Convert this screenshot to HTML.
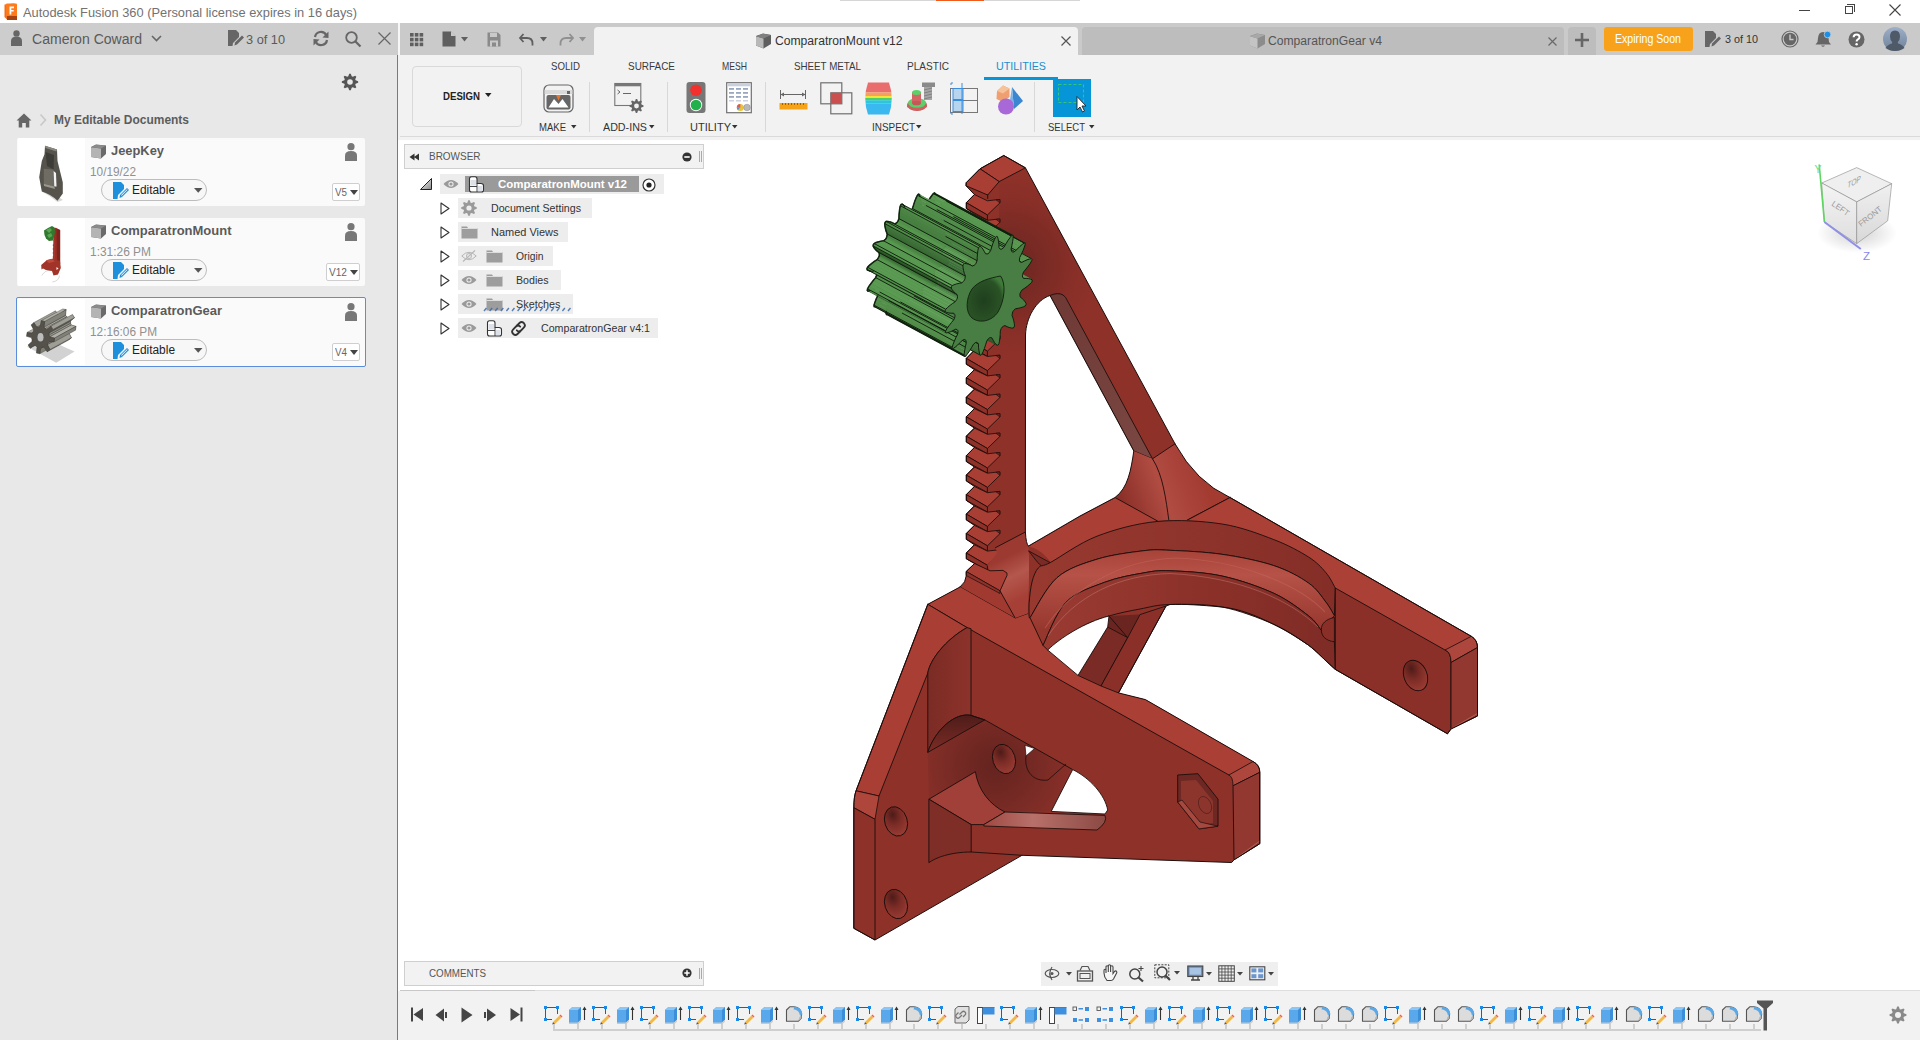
<!DOCTYPE html>
<html><head><meta charset="utf-8">
<style>
*{margin:0;padding:0;box-sizing:border-box}
html,body{width:1920px;height:1040px;overflow:hidden;background:#fff;font-family:"Liberation Sans",sans-serif;position:relative}
.a{position:absolute}
.t{position:absolute;white-space:nowrap;line-height:1}
svg{position:absolute;overflow:visible}
</style></head><body>
<div class="a" style="left:0px;top:0px;width:1920px;height:23px;background:#fff;"></div>
<div class="a" style="left:840px;top:0px;width:240px;height:1px;background:#d6d6d6;"></div>
<div class="a" style="left:936px;top:0px;width:48px;height:1px;background:#f05a1a;"></div>
<div class="a" style="left:0px;top:23px;width:398px;height:32px;background:#cdcdcd;"></div>
<div class="a" style="left:398px;top:23px;width:2px;height:32px;background:#f7f7f7;"></div>
<div class="a" style="left:0px;top:55px;width:397px;height:985px;background:#e8e8e8;"></div>
<div class="a" style="left:397px;top:55px;width:1px;height:985px;background:#7a7a7a;"></div>
<div class="a" style="left:400px;top:23px;width:1520px;height:32px;background:#cacaca;"></div>
<div class="a" style="left:594px;top:27px;width:484px;height:28px;background:#f2f2f2;border-radius:4px 4px 0 0"></div>
<div class="a" style="left:1082px;top:27px;width:482px;height:28px;background:#bdbdbd;border-radius:4px 4px 0 0"></div>
<div class="a" style="left:1568px;top:27px;width:28px;height:28px;background:#bdbdbd;border-radius:4px 4px 0 0"></div>
<div class="a" style="left:398px;top:55px;width:1522px;height:85px;background:#f2f2f2;"></div>
<div class="a" style="left:400px;top:136px;width:1520px;height:1px;background:#dadada;"></div>
<div class="a" style="left:398px;top:140px;width:1522px;height:850px;background:#fff;"></div>
<div class="a" style="left:400px;top:990px;width:135px;height:1px;background:#c8c8c8;"></div>
<div class="a" style="left:535px;top:990px;width:1385px;height:1px;background:#dedede;"></div>
<div class="a" style="left:398px;top:991px;width:1522px;height:49px;background:#f2f2f2;"></div>
<svg style="left:3px;top:3px;" width="15" height="17" viewBox="0 0 15 17"><path d="M1.5 1.5 L11 0.5 L14 2 L14 16.5 L4 16.5 L1.5 14 Z" fill="#f26e1d"/>
<rect x="3" y="0.5" width="11" height="13" rx="1" fill="#ff7a1a"/>
<rect x="4" y="13" width="10" height="4" fill="#a8420f"/>
<path d="M6.5 3.5 h4.5 v1.8 h-2.7 v1.6 h2.4 v1.7 h-2.4 v3 h-1.8 z" fill="#fff"/></svg>
<div class="t" style="left:23.00px;top:5.50px;font-size:13px;color:#727272;font-weight:normal;transform:scaleX(0.9876);transform-origin:0 0;">Autodesk Fusion 360 (Personal license expires in 16 days)</div>
<div class="a" style="left:1799px;top:10px;width:11px;height:1px;background:#444;"></div>
<div class="a" style="left:1845px;top:6px;width:8px;height:8px;border:1px solid #444"></div>
<div class="a" style="left:1847px;top:4px;width:8px;height:8px;border-top:1px solid #444;border-right:1px solid #444"></div>
<svg style="left:1889px;top:4px;" width="12" height="12" viewBox="0 0 12 12"><path d="M0.5 0.5 L11.5 11.5 M11.5 0.5 L0.5 11.5" stroke="#444" stroke-width="1.1"/></svg>
<svg style="left:11px;top:30px;" width="11" height="16" viewBox="0 0 11 16"><circle cx="5.5" cy="3.4" r="3.2" fill="#666"/><path d="M0 16 V11 Q0 6.5 5.5 6.5 Q11 6.5 11 11 V16 Z" fill="#666"/></svg>
<div class="t" style="left:32.00px;top:32.15px;font-size:14px;color:#5a5a5a;font-weight:normal;transform:scaleX(1.0026);transform-origin:0 0;">Cameron Coward</div>
<svg style="left:151px;top:35px;" width="11" height="7" viewBox="0 0 11 7"><path d="M1 1 L5.5 5.5 L10 1" stroke="#666" stroke-width="1.6" fill="none"/></svg>
<svg style="left:228px;top:30px;" width="16" height="16" viewBox="0 0 16 16"><path d="M0 0 H8 L11 3 V7 L5 13 L4.5 16 H0 Z" fill="#666"/><path d="M8 0 V3 H11" fill="#cbcbcb" opacity="0"/><path d="M6.5 15.5 L7 12.5 L14 5.5 L16 7.5 L9 14.5 Z" fill="#666"/></svg>
<div class="t" style="left:246.00px;top:33.00px;font-size:13px;color:#5a5a5a;font-weight:normal;transform:scaleX(0.9810);transform-origin:0 0;">3 of 10</div>
<svg style="left:312px;top:30px;" width="18" height="17" viewBox="0 0 18 17"><path d="M3 7 A6 6 0 0 1 14.2 5" stroke="#666" stroke-width="2.2" fill="none"/><path d="M16.5 1.5 L16.5 8 L10.5 7.5 Z" fill="#666"/><path d="M15 10 A6 6 0 0 1 3.8 12" stroke="#666" stroke-width="2.2" fill="none"/><path d="M1.5 15.5 L1.5 9 L7.5 9.5 Z" fill="#666"/></svg>
<svg style="left:345px;top:31px;" width="17" height="17" viewBox="0 0 17 17"><circle cx="6.5" cy="6.5" r="5.3" stroke="#666" stroke-width="1.8" fill="none"/><path d="M10.5 10.5 L15.5 15.5" stroke="#666" stroke-width="2.2"/></svg>
<svg style="left:378px;top:32px;" width="13" height="13" viewBox="0 0 13 13"><path d="M0.5 0.5 L12.5 12.5 M12.5 0.5 L0.5 12.5" stroke="#666" stroke-width="1.2"/></svg>
<svg style="left:341px;top:73px;" width="18" height="18" viewBox="0 0 18 18"><polygon points="8.20,0.84 9.80,0.84 10.71,3.35 11.78,3.79 14.20,2.66 15.34,3.80 14.21,6.22 14.65,7.29 17.16,8.20 17.16,9.80 14.65,10.71 14.21,11.78 15.34,14.20 14.20,15.34 11.78,14.21 10.71,14.65 9.80,17.16 8.20,17.16 7.29,14.65 6.22,14.21 3.80,15.34 2.66,14.20 3.79,11.78 3.35,10.71 0.84,9.80 0.84,8.20 3.35,7.29 3.79,6.22 2.66,3.80 3.80,2.66 6.22,3.79 7.29,3.35" fill="#555"/><circle cx="9" cy="9" r="5.08" fill="#555"/><circle cx="9" cy="9" r="2.80" fill="#e8e8e8"/></svg>
<svg style="left:16px;top:113px;" width="16" height="15" viewBox="0 0 16 15"><path d="M8 0.5 L15.5 7.5 H13.3 V14.5 H9.8 V10 H6.2 V14.5 H2.7 V7.5 H0.5 Z" fill="#666"/></svg>
<svg style="left:39px;top:113px;" width="8" height="14" viewBox="0 0 8 14"><path d="M1.5 1.5 L6.5 7 L1.5 12.5" stroke="#c8c8c8" stroke-width="1.6" fill="none"/></svg>
<div class="t" style="left:54.00px;top:114.14px;font-size:12px;color:#5c5c5c;font-weight:bold;transform:scaleX(0.9974);transform-origin:0 0;">My Editable Documents</div>
<div class="a" style="left:17px;top:138px;width:348px;height:68px;background:#fafafa;border-radius:2px"></div>
<div class="a" style="left:18px;top:138px;width:67px;height:68px;background:#fff;"></div>
<svg style="left:90px;top:144px;" width="17" height="15" viewBox="0 0 17 15"><path d="M1 3 L6 0.5 L16 1.5 L16 10 L11 14.5 L1 13 Z" fill="#6a6a6a"/><path d="M1 3.2 L11 4.5 L11 14.5 L1 13 Z" fill="#b4b4b4"/><path d="M1 3.2 L6 0.8 L16 1.6 L11 4.5 Z" fill="#8a8a8a"/></svg>
<div class="t" style="left:111.00px;top:143.50px;font-size:13px;color:#5a5a5a;font-weight:bold;transform:scaleX(0.9910);transform-origin:0 0;">JeepKey</div>
<div class="t" style="left:90.00px;top:165.84px;font-size:12px;color:#909090;font-weight:normal;transform:scaleX(0.9848);transform-origin:0 0;">10/19/22</div>
<div class="a" style="left:101px;top:179px;width:106px;height:22px;border:1px solid #bdbdbd;border-radius:11px;background:#f7f7f7"></div>
<svg style="left:113px;top:182px;" width="16" height="17" viewBox="0 0 16 17"><path d="M0 0 H8 L11 3 V7 L5 13 L4.5 17 H0 Z" fill="#1d8fdb"/><path d="M6.5 16 L7 13 L14 6 L16 8 L9 15 Z" fill="#1d8fdb"/><path d="M8.2 14.6 L8.6 12.6 L14 7.2 L14.6 7.8 L9.2 13.2 Z" fill="#fff" opacity="0.9"/></svg>
<div class="t" style="left:132.00px;top:183.84px;font-size:12px;color:#222;font-weight:normal;transform:scaleX(0.9916);transform-origin:0 0;">Editable</div>
<svg style="left:194px;top:188px;" width="9" height="5" viewBox="0 0 9 5"><path d="M0 0 H8.5 L4.25 4.8 Z" fill="#555"/></svg>
<svg style="left:345px;top:143px;" width="12" height="18" viewBox="0 0 12 18"><circle cx="6" cy="3.7" r="3.6" fill="#777"/><path d="M0 18 V12.5 Q0 8 6 8 Q12 8 12 12.5 V18 Z" fill="#777"/></svg>
<div class="a" style="left:331.5px;top:183px;width:28px;height:18px;border:1px solid #cfcfcf;border-radius:2px;background:#fff"></div>
<div class="t" style="left:335.00px;top:187.19px;font-size:11px;color:#666;font-weight:normal;transform:scaleX(0.8919);transform-origin:0 0;">V5</div>
<svg style="left:349.5px;top:189.5px;" width="8" height="5" viewBox="0 0 8 5"><path d="M0 0 H8 L4 5 Z" fill="#444"/></svg>
<div class="a" style="left:17px;top:218px;width:348px;height:68px;background:#fafafa;border-radius:2px"></div>
<div class="a" style="left:18px;top:218px;width:67px;height:68px;background:#fff;"></div>
<svg style="left:90px;top:224px;" width="17" height="15" viewBox="0 0 17 15"><path d="M1 3 L6 0.5 L16 1.5 L16 10 L11 14.5 L1 13 Z" fill="#6a6a6a"/><path d="M1 3.2 L11 4.5 L11 14.5 L1 13 Z" fill="#b4b4b4"/><path d="M1 3.2 L6 0.8 L16 1.6 L11 4.5 Z" fill="#8a8a8a"/></svg>
<div class="t" style="left:111.00px;top:223.50px;font-size:13px;color:#5a5a5a;font-weight:bold;transform:scaleX(0.9992);transform-origin:0 0;">ComparatronMount</div>
<div class="t" style="left:90.00px;top:245.84px;font-size:12px;color:#909090;font-weight:normal;transform:scaleX(0.9939);transform-origin:0 0;">1:31:26 PM</div>
<div class="a" style="left:101px;top:259px;width:106px;height:22px;border:1px solid #bdbdbd;border-radius:11px;background:#f7f7f7"></div>
<svg style="left:113px;top:262px;" width="16" height="17" viewBox="0 0 16 17"><path d="M0 0 H8 L11 3 V7 L5 13 L4.5 17 H0 Z" fill="#1d8fdb"/><path d="M6.5 16 L7 13 L14 6 L16 8 L9 15 Z" fill="#1d8fdb"/><path d="M8.2 14.6 L8.6 12.6 L14 7.2 L14.6 7.8 L9.2 13.2 Z" fill="#fff" opacity="0.9"/></svg>
<div class="t" style="left:132.00px;top:263.84px;font-size:12px;color:#222;font-weight:normal;transform:scaleX(0.9916);transform-origin:0 0;">Editable</div>
<svg style="left:194px;top:268px;" width="9" height="5" viewBox="0 0 9 5"><path d="M0 0 H8.5 L4.25 4.8 Z" fill="#555"/></svg>
<svg style="left:345px;top:223px;" width="12" height="18" viewBox="0 0 12 18"><circle cx="6" cy="3.7" r="3.6" fill="#777"/><path d="M0 18 V12.5 Q0 8 6 8 Q12 8 12 12.5 V18 Z" fill="#777"/></svg>
<div class="a" style="left:325.5px;top:263px;width:34px;height:18px;border:1px solid #cfcfcf;border-radius:2px;background:#fff"></div>
<div class="t" style="left:329.00px;top:267.19px;font-size:11px;color:#666;font-weight:normal;transform:scaleX(0.9197);transform-origin:0 0;">V12</div>
<svg style="left:349.5px;top:269.5px;" width="8" height="5" viewBox="0 0 8 5"><path d="M0 0 H8 L4 5 Z" fill="#444"/></svg>
<div class="a" style="left:16px;top:297px;width:350px;height:70px;background:#fafafa;border:1px solid #5a8edb;border-radius:2px"></div>
<div class="a" style="left:18px;top:299px;width:67px;height:66px;background:#fff;"></div>
<svg style="left:90px;top:304px;" width="17" height="15" viewBox="0 0 17 15"><path d="M1 3 L6 0.5 L16 1.5 L16 10 L11 14.5 L1 13 Z" fill="#6a6a6a"/><path d="M1 3.2 L11 4.5 L11 14.5 L1 13 Z" fill="#b4b4b4"/><path d="M1 3.2 L6 0.8 L16 1.6 L11 4.5 Z" fill="#8a8a8a"/></svg>
<div class="t" style="left:111.00px;top:303.50px;font-size:13px;color:#5a5a5a;font-weight:bold;transform:scaleX(0.9978);transform-origin:0 0;">ComparatronGear</div>
<div class="t" style="left:90.00px;top:325.84px;font-size:12px;color:#909090;font-weight:normal;transform:scaleX(0.9846);transform-origin:0 0;">12:16:06 PM</div>
<div class="a" style="left:101px;top:339px;width:106px;height:22px;border:1px solid #bdbdbd;border-radius:11px;background:#f7f7f7"></div>
<svg style="left:113px;top:342px;" width="16" height="17" viewBox="0 0 16 17"><path d="M0 0 H8 L11 3 V7 L5 13 L4.5 17 H0 Z" fill="#1d8fdb"/><path d="M6.5 16 L7 13 L14 6 L16 8 L9 15 Z" fill="#1d8fdb"/><path d="M8.2 14.6 L8.6 12.6 L14 7.2 L14.6 7.8 L9.2 13.2 Z" fill="#fff" opacity="0.9"/></svg>
<div class="t" style="left:132.00px;top:343.84px;font-size:12px;color:#222;font-weight:normal;transform:scaleX(0.9916);transform-origin:0 0;">Editable</div>
<svg style="left:194px;top:348px;" width="9" height="5" viewBox="0 0 9 5"><path d="M0 0 H8.5 L4.25 4.8 Z" fill="#555"/></svg>
<svg style="left:345px;top:303px;" width="12" height="18" viewBox="0 0 12 18"><circle cx="6" cy="3.7" r="3.6" fill="#777"/><path d="M0 18 V12.5 Q0 8 6 8 Q12 8 12 12.5 V18 Z" fill="#777"/></svg>
<div class="a" style="left:331.5px;top:343px;width:28px;height:18px;border:1px solid #cfcfcf;border-radius:2px;background:#fff"></div>
<div class="t" style="left:335.00px;top:347.19px;font-size:11px;color:#666;font-weight:normal;transform:scaleX(0.8919);transform-origin:0 0;">V4</div>
<svg style="left:349.5px;top:349.5px;" width="8" height="5" viewBox="0 0 8 5"><path d="M0 0 H8 L4 5 Z" fill="#444"/></svg>
<svg style="left:17px;top:138px;" width="68" height="68" viewBox="0 0 68 68">
<path d="M24.8 53.6 Q33 58 40.5 64 L46 62 Q38 56 30 52 Z" fill="#d8d8d8"/>
<path d="M28 7.8 L40 11.4 L40.5 22.9 L45.8 44.4 L45.8 55.6 L40.5 62.7 Q33 56 24.8 53.6 L22.2 39.2 L24.8 22.9 L27.5 16.3 Z" fill="#55534b"/>
<path d="M28 7.8 L40 11.4 L39.5 13.5 L28.5 10 Z" fill="#8a877e"/>
<path d="M26.8 30.7 L36.6 31.4 L37.3 48.4 L26.8 45.8 Z" fill="#6e6c63"/>
<path d="M36.6 33 L39 35 L39.5 48.6 L37.3 48.4 Z" fill="#f4f4f4"/>
<path d="M28.5 14 L37 17 L36.6 31.4 L30 28 Z" fill="#3e3c36"/>
<path d="M26.8 45.8 L37.3 48.4 L38 51 L27 48 Z" fill="#9a978d"/></svg>
<svg style="left:17px;top:218px;" width="68" height="68" viewBox="0 0 68 68">
<path d="M24.8 57.5 Q28 52 34 52.3" stroke="#cfcfcf" stroke-width="0.8" fill="none"/>
<path d="M35.3 64 Q42 63 42.5 57.5" stroke="#cfcfcf" stroke-width="0.8" fill="none"/>
<path d="M36.5 10 L39 9.8 L43.1 12 L43.1 45.8 L36 45.8 Z" fill="#9b2f25"/>
<path d="M39.5 11 L43.1 12 L43.1 45.8 L40 45.8 Z" fill="#7f241d"/>
<path d="M35.5 23 L37.5 23 L37 26 L35.5 27 L37 29 L35.5 31 L37 33 L35.5 35 L37 37 L35.5 39 L37 41 L36 45 L38 45 L38 22 Z" fill="#a5362b"/>
<path d="M24.2 47 L30 42 L36 40.5 L43 43 L43.8 50 L41 56.5 L36.5 57.5 L35 53 L29 52 L26 50.5 L24.5 51.5 Z" fill="#a13328"/>
<path d="M29 42.5 L35 41 L38 43.5 L32 45 Z" fill="#c04a3c"/>
<path d="M39.5 49 L41.5 50.5 L39.5 52 Z" fill="#fff"/>
<path d="M27 12.5 L31 10 L35 8 L37.5 9.5 L38 14 L37 19 L36 22.5 L32 22.9 L29 20.5 L27.5 17 Z" fill="#2f7a2e"/>
<path d="M29 12 L33 10 L35 12 L32 15 Z M30 17 L34 15 L35.5 18 L32 20 Z" fill="#5aa652"/></svg>
<svg style="left:17px;top:298px;" width="68" height="68" viewBox="0 0 68 68"><path d="M9.8 48.4 L39.2 64.7 L57.5 53.6 L36 44 Z" fill="#d2d2d2"/><path d="M53.6 25.2 L54.3 27.0 L59.1 28.3 L58.5 32.2 L53.7 31.5 L52.4 32.9 L51.9 34.8 L54.5 39.7 L51.7 42.0 L48.7 37.4 L47.0 37.4 L45.4 38.3 L44.4 43.9 L41.0 43.2 L41.6 37.5 L40.4 36.0 L38.8 35.4 L34.7 38.4 L32.7 35.1 L36.6 31.7 L36.6 29.6 L35.9 27.8 L31.1 26.5 L31.7 22.6 L36.5 23.3 L37.8 21.9 L38.3 20.0 L35.7 15.1 L38.5 12.8 L41.5 17.4 L43.2 17.4 L44.8 16.5 L45.8 10.9 L49.2 11.6 L48.6 17.3 L49.8 18.8 L51.4 19.4 L55.5 16.4 L57.5 19.7 L53.6 23.1 Z" fill="#6a675f"/><path d="M17.2 47.2 L13.1 50.2 L34.7 38.4 L38.8 35.4 Z" fill="#5e5e56" stroke="#3e3c36" stroke-width="0.4"/><path d="M10.1 34.4 L14.9 35.1 L36.5 23.3 L31.7 22.6 Z" fill="#afafa7" stroke="#3e3c36" stroke-width="0.4"/><path d="M23.8 50.1 L22.8 55.7 L44.4 43.9 L45.4 38.3 Z" fill="#7f7f77" stroke="#3e3c36" stroke-width="0.4"/><path d="M25.4 49.2 L23.8 50.1 L45.4 38.3 L47.0 37.4 Z" fill="#5a5a52" stroke="#3e3c36" stroke-width="0.4"/><path d="M32.9 51.5 L30.1 53.8 L51.7 42.0 L54.5 39.7 Z" fill="#606058" stroke="#3e3c36" stroke-width="0.4"/><path d="M16.9 24.6 L19.9 29.2 L41.5 17.4 L38.5 12.8 Z" fill="#a1a199" stroke="#3e3c36" stroke-width="0.4"/><path d="M30.3 46.6 L32.9 51.5 L54.5 39.7 L51.9 34.8 Z" fill="#9e9e96" stroke="#3e3c36" stroke-width="0.4"/><path d="M19.9 29.2 L21.6 29.2 L43.2 17.4 L41.5 17.4 Z" fill="#afafa7" stroke="#3e3c36" stroke-width="0.4"/><path d="M30.8 44.7 L30.3 46.6 L51.9 34.8 L52.4 32.9 Z" fill="#7a7a72" stroke="#3e3c36" stroke-width="0.4"/><path d="M32.1 43.3 L30.8 44.7 L52.4 32.9 L53.7 31.5 Z" fill="#66665e" stroke="#3e3c36" stroke-width="0.4"/><path d="M27.0 29.1 L28.2 30.6 L49.8 18.8 L48.6 17.3 Z" fill="#a4a49c" stroke="#3e3c36" stroke-width="0.4"/><path d="M32.0 37.0 L32.7 38.8 L54.3 27.0 L53.6 25.2 Z" fill="#9a9a92" stroke="#3e3c36" stroke-width="0.4"/><path d="M28.2 30.6 L29.8 31.2 L51.4 19.4 L49.8 18.8 Z" fill="#afafa7" stroke="#3e3c36" stroke-width="0.4"/><path d="M32.0 34.9 L32.0 37.0 L53.6 25.2 L53.6 23.1 Z" fill="#888880" stroke="#3e3c36" stroke-width="0.4"/><path d="M27.6 23.4 L27.0 29.1 L48.6 17.3 L49.2 11.6 Z" fill="#83837b" stroke="#3e3c36" stroke-width="0.4"/><path d="M24.2 22.7 L27.6 23.4 L49.2 11.6 L45.8 10.9 Z" fill="#b0b0a8" stroke="#3e3c36" stroke-width="0.4"/><path d="M32.7 38.8 L37.5 40.1 L59.1 28.3 L54.3 27.0 Z" fill="#afafa7" stroke="#3e3c36" stroke-width="0.4"/><path d="M37.5 40.1 L36.9 44.0 L58.5 32.2 L59.1 28.3 Z" fill="#818179" stroke="#3e3c36" stroke-width="0.4"/><path d="M35.9 31.5 L32.0 34.9 L53.6 23.1 L57.5 19.7 Z" fill="#616159" stroke="#3e3c36" stroke-width="0.4"/><path d="M33.9 28.2 L35.9 31.5 L57.5 19.7 L55.5 16.4 Z" fill="#9f9f97" stroke="#3e3c36" stroke-width="0.4"/><path d="M32.0 37.0 L32.7 38.8 L37.5 40.1 L36.9 44.0 L32.1 43.3 L30.8 44.7 L30.3 46.6 L32.9 51.5 L30.1 53.8 L27.1 49.2 L25.4 49.2 L23.8 50.1 L22.8 55.7 L19.4 55.0 L20.0 49.3 L18.8 47.8 L17.2 47.2 L13.1 50.2 L11.1 46.9 L15.0 43.5 L15.0 41.4 L14.3 39.6 L9.5 38.3 L10.1 34.4 L14.9 35.1 L16.2 33.7 L16.7 31.8 L14.1 26.9 L16.9 24.6 L19.9 29.2 L21.6 29.2 L23.2 28.3 L24.2 22.7 L27.6 23.4 L27.0 29.1 L28.2 30.6 L29.8 31.2 L33.9 28.2 L35.9 31.5 L32.0 34.9 Z" fill="#55524b" stroke="#3a3833" stroke-width="0.5"/><ellipse cx="23.5" cy="39.2" rx="3" ry="4.3" fill="#bdbdbd"/></svg>
<svg style="left:409px;top:32px;" width="15" height="15" viewBox="0 0 15 15"><rect x="1.0" y="1.0" width="3.6" height="3.6" fill="#5f5f5f"/><rect x="1.0" y="5.8" width="3.6" height="3.6" fill="#5f5f5f"/><rect x="1.0" y="10.6" width="3.6" height="3.6" fill="#5f5f5f"/><rect x="5.8" y="1.0" width="3.6" height="3.6" fill="#5f5f5f"/><rect x="5.8" y="5.8" width="3.6" height="3.6" fill="#5f5f5f"/><rect x="5.8" y="10.6" width="3.6" height="3.6" fill="#5f5f5f"/><rect x="10.6" y="1.0" width="3.6" height="3.6" fill="#5f5f5f"/><rect x="10.6" y="5.8" width="3.6" height="3.6" fill="#5f5f5f"/><rect x="10.6" y="10.6" width="3.6" height="3.6" fill="#5f5f5f"/></svg>
<svg style="left:442px;top:31px;" width="14" height="16" viewBox="0 0 14 16"><path d="M0.5 0.5 H9 L13.5 5 V15.5 H0.5 Z" fill="#5f5f5f"/><path d="M9 0.5 V5 H13.5" fill="#c9c9c9"/><path d="M9.3 0.5 L13.5 4.7 H9.3 Z" fill="#c9c9c9"/></svg>
<svg style="left:461px;top:37px;" width="8" height="5" viewBox="0 0 8 5"><path d="M0 0 H7 L3.5 4.5 Z" fill="#5f5f5f"/></svg>
<svg style="left:487px;top:32px;" width="14" height="15" viewBox="0 0 14 15"><path d="M0.5 0.5 H11 L13.5 3 V14.5 H0.5 Z" fill="#8a8a8a"/><rect x="3" y="1" width="7" height="4" fill="#c9c9c9"/><rect x="3" y="8.5" width="8" height="6" fill="#c9c9c9"/><rect x="5" y="10.5" width="4" height="4" fill="#8a8a8a"/></svg>
<svg style="left:519px;top:33px;" width="15" height="13" viewBox="0 0 15 13"><path d="M4.5 1 L1 5 L4.5 9" stroke="#5f5f5f" stroke-width="1.8" fill="none"/><path d="M1.5 5 H8 Q13.5 5 13.5 10.5 V12.5" stroke="#5f5f5f" stroke-width="1.8" fill="none"/></svg>
<svg style="left:540px;top:37px;" width="8" height="5" viewBox="0 0 8 5"><path d="M0 0 H7 L3.5 4.5 Z" fill="#5f5f5f"/></svg>
<svg style="left:559px;top:33px;" width="15" height="13" viewBox="0 0 15 13"><path d="M10.5 1 L14 5 L10.5 9" stroke="#909090" stroke-width="1.8" fill="none"/><path d="M13.5 5 H7 Q1.5 5 1.5 10.5 V12.5" stroke="#909090" stroke-width="1.8" fill="none"/></svg>
<svg style="left:579px;top:37px;" width="8" height="5" viewBox="0 0 8 5"><path d="M0 0 H7 L3.5 4.5 Z" fill="#909090"/></svg>
<svg style="left:755px;top:33px;" width="17" height="16" viewBox="0 0 17 16"><path d="M1 3 L8 0.5 L16 2 L16 11 L8.5 15.5 L1 12.5 Z" fill="#5e5e5e"/><path d="M1 3.2 L8.5 5.5 L8.5 15.5 L1 12.5 Z" fill="#b8b8b8"/><path d="M1 3.2 L8 0.7 L16 2.1 L8.5 5.5 Z" fill="#808080"/></svg>
<div class="t" style="left:775.00px;top:35.44px;font-size:12px;color:#333;font-weight:normal;transform:scaleX(1.0114);transform-origin:0 0;">ComparatronMount v12</div>
<svg style="left:1061px;top:36px;" width="10" height="10" viewBox="0 0 10 10"><path d="M0.5 0.5 L9.5 9.5 M9.5 0.5 L0.5 9.5" stroke="#555" stroke-width="1.2"/></svg>
<svg style="left:1249px;top:33px;" width="17" height="16" viewBox="0 0 17 16"><path d="M1 3 L8 0.5 L16 2 L16 11 L8.5 15.5 L1 12.5 Z" fill="#8c8c8c"/><path d="M1 3.2 L8.5 5.5 L8.5 15.5 L1 12.5 Z" fill="#c4c4c4"/><path d="M1 3.2 L8 0.7 L16 2.1 L8.5 5.5 Z" fill="#a8a8a8"/></svg>
<div class="t" style="left:1268.00px;top:35.44px;font-size:12px;color:#555;font-weight:normal;transform:scaleX(1.0114);transform-origin:0 0;">ComparatronGear v4</div>
<svg style="left:1548px;top:37px;" width="9" height="9" viewBox="0 0 9 9"><path d="M0.5 0.5 L8.5 8.5 M8.5 0.5 L0.5 8.5" stroke="#6a6a6a" stroke-width="1.2"/></svg>
<svg style="left:1575px;top:33px;" width="14" height="14" viewBox="0 0 14 14"><path d="M7 0 V14 M0 7 H14" stroke="#666" stroke-width="2.6"/></svg>
<div class="a" style="left:1604px;top:27px;width:89px;height:24px;background:#f8a21c;border-radius:3px"></div>
<div class="t" style="left:1615.00px;top:33.34px;font-size:12px;color:#fff;font-weight:normal;transform:scaleX(0.8834);transform-origin:0 0;">Expiring Soon</div>
<svg style="left:1705px;top:31px;" width="16" height="16" viewBox="0 0 16 16"><path d="M0 0 H8 L11 3 V7 L5 13 L4.5 16 H0 Z" fill="#666"/><path d="M6.5 15.5 L7 12.5 L14 5.5 L16 7.5 L9 14.5 Z" fill="#666"/></svg>
<div class="t" style="left:1725.00px;top:33.77px;font-size:11.5px;color:#333;font-weight:normal;transform:scaleX(0.9383);transform-origin:0 0;">3 of 10</div>
<svg style="left:1781px;top:30px;" width="18" height="18" viewBox="0 0 18 18"><circle cx="9" cy="9" r="8" stroke="#666" stroke-width="1.2" fill="none"/><circle cx="9" cy="9" r="6.3" fill="#666"/><path d="M9 4.5 V9.5 H12.5" stroke="#c9c9c9" stroke-width="1.4" fill="none"/></svg>
<svg style="left:1815px;top:30px;" width="18" height="18" viewBox="0 0 18 18"><path d="M8 2 Q13 2 13.5 8 L14 12 L16 14.5 H0.5 L2.5 12 L3 8 Q3.5 2 8 2 Z" fill="#666"/><path d="M6 15.5 Q8 18 10 15.5 Z" fill="#666"/><circle cx="12.5" cy="4.5" r="3.3" fill="#1a8fe3" stroke="#c9c9c9" stroke-width="0.8"/></svg>
<svg style="left:1848px;top:31px;" width="17" height="17" viewBox="0 0 17 17"><circle cx="8.5" cy="8.5" r="8" fill="#666"/><path d="M5.6 6.3 Q5.6 3.4 8.6 3.4 Q11.5 3.4 11.5 6 Q11.5 7.6 9.6 8.6 Q8.6 9.2 8.6 10.5" stroke="#fff" stroke-width="2" fill="none"/><circle cx="8.6" cy="13.2" r="1.2" fill="#fff"/></svg>
<svg style="left:1883px;top:27px;" width="24" height="24" viewBox="0 0 24 24"><defs><linearGradient id="av" x1="0" y1="0" x2="0" y2="1"><stop offset="0" stop-color="#9eb0c8"/><stop offset="1" stop-color="#6f8099"/></linearGradient></defs><circle cx="12" cy="12" r="12" fill="url(#av)"/><path d="M12 3.5 Q17 3.5 17 9.5 Q17 13 14.8 15 L15 16.5 Q20 18 21.5 21 Q17.5 24 12 24 Q6.5 24 2.5 21 Q4 18 9 16.5 L9.2 15 Q7 13 7 9.5 Q7 3.5 12 3.5 Z" fill="#4f5a69"/></svg>
<div class="a" style="left:411.5px;top:65.5px;width:110px;height:61px;border:1px solid #d9d9d9;border-radius:4px;background:#f2f2f2"></div>
<div class="t" style="left:443.00px;top:90.61px;font-size:10.5px;color:#222;font-weight:bold;transform:scaleX(0.9191);transform-origin:0 0;">DESIGN</div>
<svg style="left:485px;top:93px;" width="7" height="5" viewBox="0 0 7 5"><path d="M0 0 H6.5 L3.25 4 Z" fill="#222"/></svg>
<div class="t" style="left:551.00px;top:60.89px;font-size:11px;color:#3a3a3a;font-weight:normal;transform:scaleX(0.8785);transform-origin:0 0;">SOLID</div>
<div class="t" style="left:628.00px;top:60.89px;font-size:11px;color:#3a3a3a;font-weight:normal;transform:scaleX(0.9046);transform-origin:0 0;">SURFACE</div>
<div class="t" style="left:722.00px;top:60.89px;font-size:11px;color:#3a3a3a;font-weight:normal;transform:scaleX(0.7866);transform-origin:0 0;">MESH</div>
<div class="t" style="left:794.00px;top:60.89px;font-size:11px;color:#3a3a3a;font-weight:normal;transform:scaleX(0.8887);transform-origin:0 0;">SHEET METAL</div>
<div class="t" style="left:907.00px;top:60.89px;font-size:11px;color:#3a3a3a;font-weight:normal;transform:scaleX(0.9161);transform-origin:0 0;">PLASTIC</div>
<div class="t" style="left:996.00px;top:60.89px;font-size:11px;color:#1a8fd0;font-weight:normal;transform:scaleX(0.9739);transform-origin:0 0;">UTILITIES</div>
<div class="a" style="left:984px;top:77px;width:74px;height:3px;background:#0696d7;"></div>
<div class="t" style="left:539.00px;top:121.69px;font-size:11px;color:#333;font-weight:normal;transform:scaleX(0.8661);transform-origin:0 0;">MAKE</div>
<div class="t" style="left:603.00px;top:121.69px;font-size:11px;color:#333;font-weight:normal;transform:scaleX(0.9729);transform-origin:0 0;">ADD-INS</div>
<div class="t" style="left:690.00px;top:121.69px;font-size:11px;color:#333;font-weight:normal;transform:scaleX(1.0012);transform-origin:0 0;">UTILITY</div>
<div class="t" style="left:872.00px;top:121.69px;font-size:11px;color:#333;font-weight:normal;transform:scaleX(0.9020);transform-origin:0 0;">INSPECT</div>
<div class="t" style="left:1048.00px;top:121.69px;font-size:11px;color:#333;font-weight:normal;transform:scaleX(0.8646);transform-origin:0 0;">SELECT</div>
<svg style="left:571px;top:124.5px;" width="6" height="4" viewBox="0 0 6 4"><path d="M0 0 H5.5 L2.75 3.6 Z" fill="#333"/></svg>
<svg style="left:649px;top:124.5px;" width="6" height="4" viewBox="0 0 6 4"><path d="M0 0 H5.5 L2.75 3.6 Z" fill="#333"/></svg>
<svg style="left:732px;top:124.5px;" width="6" height="4" viewBox="0 0 6 4"><path d="M0 0 H5.5 L2.75 3.6 Z" fill="#333"/></svg>
<svg style="left:916px;top:124.5px;" width="6" height="4" viewBox="0 0 6 4"><path d="M0 0 H5.5 L2.75 3.6 Z" fill="#333"/></svg>
<svg style="left:1089px;top:124.5px;" width="6" height="4" viewBox="0 0 6 4"><path d="M0 0 H5.5 L2.75 3.6 Z" fill="#333"/></svg>
<div class="a" style="left:589px;top:82px;width:1px;height:50px;background:#d8d8d8;"></div>
<div class="a" style="left:667px;top:82px;width:1px;height:50px;background:#d8d8d8;"></div>
<div class="a" style="left:765px;top:82px;width:1px;height:50px;background:#d8d8d8;"></div>
<div class="a" style="left:1034px;top:82px;width:1px;height:50px;background:#d8d8d8;"></div>
<svg style="left:543px;top:84px;" width="31" height="29" viewBox="0 0 31 29"><rect x="1" y="1" width="29" height="27" rx="5" fill="#f2f2f2" stroke="#666" stroke-width="1.2"/><rect x="1.6" y="6" width="27.8" height="4" fill="#dadada"/><rect x="24" y="7" width="3" height="3" fill="#666"/><rect x="3.5" y="11" width="24" height="14.5" rx="2" fill="#666"/><path d="M5.5 23.5 L11 15 L15.5 20 L19.5 15 L25.5 23.5 Z" fill="#fff"/><path d="M13 11 H18 L15.5 16.5 Z" fill="#e8762c"/></svg>
<svg style="left:614px;top:82px;" width="31" height="33" viewBox="0 0 31 33"><rect x="0.8" y="1.5" width="26" height="22" fill="#f2f2f2" stroke="#777" stroke-width="1.1"/><rect x="0.8" y="1.5" width="26" height="2.8" fill="#777"/><path d="M3.5 8 L6 10 L3.5 12" stroke="#666" stroke-width="1" fill="none"/><path d="M9 11.5 H17" stroke="#666" stroke-width="1"/><polygon points="21.81,17.03 23.19,17.03 23.96,19.18 24.88,19.56 26.94,18.59 27.91,19.56 26.94,21.62 27.32,22.54 29.47,23.31 29.47,24.69 27.32,25.46 26.94,26.38 27.91,28.44 26.94,29.41 24.88,28.44 23.96,28.82 23.19,30.97 21.81,30.97 21.04,28.82 20.12,28.44 18.06,29.41 17.09,28.44 18.06,26.38 17.68,25.46 15.53,24.69 15.53,23.31 17.68,22.54 18.06,21.62 17.09,19.56 18.06,18.59 20.12,19.56 21.04,19.18" fill="#666"/><circle cx="22.5" cy="24" r="4.34" fill="#666"/><circle cx="22.5" cy="24" r="2.40" fill="#f2f2f2"/></svg>
<svg style="left:686px;top:81px;" width="20" height="33" viewBox="0 0 20 33"><rect x="0.5" y="1" width="19" height="31" rx="3" fill="#777"/><circle cx="10" cy="9.2" r="5.8" fill="#f2302e"/><circle cx="10" cy="24" r="6.2" fill="#fff"/><circle cx="10" cy="24" r="5.3" fill="#21b04a"/></svg>
<svg style="left:726px;top:82px;" width="27" height="31" viewBox="0 0 27 31"><rect x="0.7" y="0.7" width="24.6" height="30" fill="#fff" stroke="#707070" stroke-width="1.2"/><rect x="1.5" y="1.5" width="23" height="2.8" fill="#c8d0dc"/><rect x="3" y="6" width="5" height="1.8" fill="#9aa8bf"/><rect x="3" y="10" width="5" height="1.8" fill="#9aa8bf"/><rect x="3" y="14" width="5" height="1.8" fill="#9aa8bf"/><rect x="10" y="6" width="5" height="1.8" fill="#9aa8bf"/><rect x="10" y="10" width="5" height="1.8" fill="#9aa8bf"/><rect x="10" y="14" width="5" height="1.8" fill="#9aa8bf"/><rect x="17" y="6" width="5" height="1.8" fill="#9aa8bf"/><rect x="17" y="10" width="5" height="1.8" fill="#9aa8bf"/><rect x="17" y="14" width="5" height="1.8" fill="#9aa8bf"/><rect x="3" y="18" width="5" height="1.5" fill="#ccd3de"/><rect x="10" y="18" width="5" height="1.5" fill="#ccd3de"/><rect x="17" y="18" width="5" height="1.5" fill="#ccd3de"/><circle cx="14.3" cy="25.5" r="3.5" fill="#e8c23a"/><path d="M14.3 25.5 V22 A3.5 3.5 0 0 0 10.8 25.5 Z" fill="#d45a6a"/><path d="M14.3 25.5 L10.8 25.5 A3.5 3.5 0 0 0 12 28 Z" fill="#5a8fd0"/><circle cx="21" cy="25.5" r="3.3" fill="#b8b8b8" stroke="#888" stroke-width="0.5"/></svg>
<svg style="left:779px;top:89px;" width="28" height="21" viewBox="0 0 28 21"><path d="M1.5 1 V10 M26.5 1 V10" stroke="#666" stroke-width="1"/><path d="M1.5 5.5 H26.5" stroke="#666" stroke-width="1"/><path d="M1.5 5.5 L5 3.5 V7.5 Z M26.5 5.5 L23 3.5 V7.5 Z" fill="#666"/><rect x="0.5" y="14" width="28" height="6.5" fill="#f6a317"/><rect x="3" y="14" width="0.9" height="2" fill="#9a5a00"/><rect x="6" y="14" width="0.9" height="2" fill="#9a5a00"/><rect x="9" y="14" width="0.9" height="2" fill="#9a5a00"/><rect x="12" y="14" width="0.9" height="2" fill="#9a5a00"/><rect x="15" y="14" width="0.9" height="2" fill="#9a5a00"/><rect x="18" y="14" width="0.9" height="2" fill="#9a5a00"/><rect x="21" y="14" width="0.9" height="2" fill="#9a5a00"/><rect x="24" y="14" width="0.9" height="2" fill="#9a5a00"/></svg>
<svg style="left:820px;top:82px;" width="33" height="33" viewBox="0 0 33 33"><rect x="0.8" y="0.8" width="21" height="21" fill="none" stroke="#6f6f6f" stroke-width="1.2"/><rect x="10.8" y="10.8" width="21" height="21" fill="none" stroke="#6f6f6f" stroke-width="1.2"/><rect x="10.8" y="10.8" width="11" height="11" fill="#c9504f"/></svg>
<svg style="left:862px;top:82px;" width="33" height="33" viewBox="0 0 33 33"><defs><clipPath id="zb"><path d="M6 0.5 H27 Q32.5 16.5 27 32.5 H6 Q0.5 16.5 6 0.5 Z"/></clipPath></defs><g clip-path="url(#zb)"><rect x="0" y="0" width="33" height="10.5" fill="#e96d6d"/><rect x="0" y="10.5" width="33" height="3.5" fill="#f6a060"/><rect x="0" y="14" width="33" height="2" fill="#f2e23a"/><rect x="0" y="16" width="33" height="2.2" fill="#4ed060"/><rect x="0" y="18.2" width="33" height="3.5" fill="#2bc7d8"/><rect x="0" y="21.7" width="33" height="12" fill="#3ab8f0"/></g></svg>
<svg style="left:906px;top:82px;" width="33" height="33" viewBox="0 0 33 33"><rect x="16" y="0.5" width="13" height="4.5" fill="#8a8a8a"/><rect x="18" y="5" width="8" height="13" fill="#a5a5a5"/><path d="M18 8 L26 6 M18 11 L26 9 M18 14 L26 12 M18 17 L26 15" stroke="#777" stroke-width="0.8"/><ellipse cx="11" cy="23" rx="10" ry="6" fill="#c45757"/><path d="M1 23 Q11 28 21 23 L21 25 Q11 32 1 25 Z" fill="#d06060"/><ellipse cx="11" cy="21" rx="9" ry="4.8" fill="#5bd06a"/><rect x="6" y="10" width="9" height="11" fill="#d46464"/><ellipse cx="10.5" cy="10.5" rx="4.5" ry="2.5" fill="#5bd06a"/><ellipse cx="10.5" cy="21" rx="4.5" ry="2.3" fill="#c45757"/></svg>
<svg style="left:950px;top:82px;" width="31" height="32" viewBox="0 0 31 32"><rect x="0.5" y="6.5" width="27" height="24" fill="none" stroke="#777" stroke-width="1"/><rect x="3" y="6.5" width="10" height="11" fill="#b7d5ef" stroke="#3a8ee0" stroke-width="1"/><rect x="3" y="18.5" width="10" height="11" fill="#b7d5ef" stroke="#3a8ee0" stroke-width="1"/><path d="M13 6.5 H27.5 M13 18.5 H27.5" stroke="#777" stroke-width="1"/><path d="M1 3 V1 H3 M1 30 V32 H3" stroke="#3a8ee0" stroke-width="1" fill="none"/><path d="M12 1 V32" stroke="#3a8ee0" stroke-width="1"/></svg>
<svg style="left:992px;top:83px;" width="33" height="32" viewBox="0 0 33 32"><path d="M5 8 L11 2.5 L17.5 5.5 L17.5 14 L11 19 L4.5 16 Z" fill="#f0a070"/><path d="M5 8 L11 2.5 L17.5 5.5 L11 10.5 Z" fill="#f6c29a"/><path d="M20 4 L31 18 L22 26 Z" fill="#3a86d0"/><path d="M20 4 L17.5 20 L22 26 Z" fill="#7ab3e8"/><circle cx="14" cy="23.5" r="8" fill="#a868d8"/></svg>
<div class="a" style="left:1053px;top:79px;width:38px;height:38px;background:#0696d7;"></div>
<svg style="left:1056px;top:82px;" width="30" height="30" viewBox="0 0 30 30"><rect x="2.5" y="2.5" width="25" height="18" fill="none" stroke="#34c47a" stroke-width="1.1" stroke-dasharray="3 2"/><path d="M21 14.5 L21 28 L24 25 L26.5 30 L28.5 29 L26 24 L30 24 Z" fill="#fff" stroke="#222" stroke-width="0.9"/></svg>
<div class="a" style="left:404px;top:144px;width:300px;height:25px;border:1px solid #cfcfcf;background:#f2f2f2"></div>
<svg style="left:409px;top:153px;" width="11" height="8" viewBox="0 0 11 8"><path d="M0.5 4 L5.5 0.5 V7.5 Z M5 4 L10 0.5 V7.5 Z" fill="#333"/></svg>
<div class="t" style="left:429.00px;top:150.99px;font-size:11px;color:#555;font-weight:normal;transform:scaleX(0.9061);transform-origin:0 0;">BROWSER</div>
<svg style="left:682px;top:152px;" width="10" height="10" viewBox="0 0 10 10"><circle cx="5" cy="5" r="4.6" fill="#333"/><rect x="2.3" y="4.2" width="5.4" height="1.6" fill="#fff"/></svg>
<div class="a" style="left:699px;top:151px;width:1px;height:11px;background:#aaa;"></div>
<div class="a" style="left:701px;top:151px;width:1px;height:11px;background:#aaa;"></div>
<div class="a" style="left:440px;top:174px;width:224px;height:20px;background:#ededed;"></div>
<svg style="left:420px;top:178px;" width="12" height="12" viewBox="0 0 12 12"><defs><linearGradient id="tg" x1="0" y1="0" x2="1" y2="1"><stop offset="0" stop-color="#fff"/><stop offset="1" stop-color="#888"/></linearGradient></defs><path d="M11.5 0.5 V11.5 H0.5 Z" fill="url(#tg)" stroke="#222" stroke-width="1"/></svg>
<svg style="left:443px;top:178px;" width="16" height="12" viewBox="0 0 16 12"><path d="M0.5 6 Q8 -2 15.5 6 Q8 14 0.5 6 Z" fill="#9a9a9a"/><circle cx="8" cy="6" r="2.6" fill="#ededed"/><circle cx="8" cy="6" r="1.6" fill="#9a9a9a"/></svg>
<div class="a" style="left:465px;top:176px;width:174px;height:16px;background:#9a9a9a;"></div>
<svg style="left:468px;top:176px;" width="17" height="17" viewBox="0 0 17 17"><path d="M1.5 3 Q1.5 0.8 3.5 0.8 H7 Q9 0.8 9 3 V7.5 H13 Q15.5 7.5 15.5 9.8 V14 Q15.5 16 13.5 16 H3.5 Q1.5 16 1.5 14 Z" fill="#fff" stroke="#333" stroke-width="1.1"/><path d="M9 7.5 V16 M1.5 10.5 H9" stroke="#333" stroke-width="0.9"/><rect x="2.5" y="4" width="5.5" height="5.5" fill="#dde2ea"/><rect x="10" y="10" width="4.5" height="5" fill="#dde2ea"/></svg>
<div class="t" style="left:498.00px;top:178.89px;font-size:11px;color:#fff;font-weight:bold;transform:scaleX(1.0449);transform-origin:0 0;">ComparatronMount v12</div>
<svg style="left:642px;top:178px;" width="14" height="14" viewBox="0 0 14 14"><circle cx="7" cy="7" r="6" fill="#fff" stroke="#333" stroke-width="1.2"/><circle cx="7" cy="7" r="2.6" fill="#222"/></svg>
<svg style="left:440px;top:202px;" width="10" height="13" viewBox="0 0 10 13"><path d="M1 1 L9 6.5 L1 12 Z" fill="#fff" stroke="#333" stroke-width="1.1" stroke-linejoin="round"/></svg>
<div class="a" style="left:458px;top:198px;width:134px;height:20px;background:#ededed;"></div>
<svg style="left:440px;top:226px;" width="10" height="13" viewBox="0 0 10 13"><path d="M1 1 L9 6.5 L1 12 Z" fill="#fff" stroke="#333" stroke-width="1.1" stroke-linejoin="round"/></svg>
<div class="a" style="left:458px;top:222px;width:110px;height:20px;background:#ededed;"></div>
<svg style="left:440px;top:250px;" width="10" height="13" viewBox="0 0 10 13"><path d="M1 1 L9 6.5 L1 12 Z" fill="#fff" stroke="#333" stroke-width="1.1" stroke-linejoin="round"/></svg>
<div class="a" style="left:458px;top:246px;width:95px;height:20px;background:#ededed;"></div>
<svg style="left:440px;top:274px;" width="10" height="13" viewBox="0 0 10 13"><path d="M1 1 L9 6.5 L1 12 Z" fill="#fff" stroke="#333" stroke-width="1.1" stroke-linejoin="round"/></svg>
<div class="a" style="left:458px;top:270px;width:103px;height:20px;background:#ededed;"></div>
<svg style="left:440px;top:298px;" width="10" height="13" viewBox="0 0 10 13"><path d="M1 1 L9 6.5 L1 12 Z" fill="#fff" stroke="#333" stroke-width="1.1" stroke-linejoin="round"/></svg>
<div class="a" style="left:458px;top:294px;width:115px;height:20px;background:#ededed;"></div>
<svg style="left:440px;top:322px;" width="10" height="13" viewBox="0 0 10 13"><path d="M1 1 L9 6.5 L1 12 Z" fill="#fff" stroke="#333" stroke-width="1.1" stroke-linejoin="round"/></svg>
<div class="a" style="left:458px;top:318px;width:200px;height:20px;background:#ededed;"></div>
<svg style="left:461px;top:200px;" width="16" height="16" viewBox="0 0 16 16"><polygon points="7.24,0.24 8.76,0.24 9.63,2.63 10.65,3.05 12.95,1.97 14.03,3.05 12.95,5.35 13.37,6.37 15.76,7.24 15.76,8.76 13.37,9.63 12.95,10.65 14.03,12.95 12.95,14.03 10.65,12.95 9.63,13.37 8.76,15.76 7.24,15.76 6.37,13.37 5.35,12.95 3.05,14.03 1.97,12.95 3.05,10.65 2.63,9.63 0.24,8.76 0.24,7.24 2.63,6.37 3.05,5.35 1.97,3.05 3.05,1.97 5.35,3.05 6.37,2.63" fill="#9a9a9a"/><circle cx="8" cy="8" r="4.84" fill="#9a9a9a"/><circle cx="8" cy="8" r="2.60" fill="#ededed"/></svg>
<div class="t" style="left:491.00px;top:202.89px;font-size:11px;color:#333;font-weight:normal;transform:scaleX(0.9684);transform-origin:0 0;">Document Settings</div>
<svg style="left:461px;top:225px;" width="17" height="14" viewBox="0 0 17 14"><path d="M0.5 1.5 H6 L7 3 H16.5 V13.5 H0.5 Z" fill="#9d9d9d"/><path d="M0.5 3.5 H16.5" stroke="#ededed" stroke-width="0.8"/></svg>
<div class="t" style="left:491.00px;top:226.89px;font-size:11px;color:#333;font-weight:normal;transform:scaleX(0.9976);transform-origin:0 0;">Named Views</div>
<svg style="left:461px;top:250px;" width="16" height="12" viewBox="0 0 16 12"><path d="M0.8 6 Q8 -1.5 15.2 6 Q8 13.5 0.8 6 Z" fill="none" stroke="#b5b5b5" stroke-width="1"/><circle cx="8" cy="6" r="2.5" fill="none" stroke="#b5b5b5" stroke-width="1"/><path d="M2 11.5 L14 0.5" stroke="#b5b5b5" stroke-width="1.1"/></svg>
<svg style="left:486px;top:249px;" width="17" height="14" viewBox="0 0 17 14"><path d="M0.5 1.5 H6 L7 3 H16.5 V13.5 H0.5 Z" fill="#9d9d9d"/><path d="M0.5 3.5 H16.5" stroke="#ededed" stroke-width="0.8"/></svg>
<div class="t" style="left:516.00px;top:250.89px;font-size:11px;color:#333;font-weight:normal;transform:scaleX(0.9372);transform-origin:0 0;">Origin</div>
<svg style="left:461px;top:274px;" width="16" height="12" viewBox="0 0 16 12"><path d="M0.5 6 Q8 -2 15.5 6 Q8 14 0.5 6 Z" fill="#9a9a9a"/><circle cx="8" cy="6" r="2.6" fill="#ededed"/><circle cx="8" cy="6" r="1.6" fill="#9a9a9a"/></svg>
<svg style="left:486px;top:273px;" width="17" height="14" viewBox="0 0 17 14"><path d="M0.5 1.5 H6 L7 3 H16.5 V13.5 H0.5 Z" fill="#9d9d9d"/><path d="M0.5 3.5 H16.5" stroke="#ededed" stroke-width="0.8"/></svg>
<div class="t" style="left:516.00px;top:274.89px;font-size:11px;color:#333;font-weight:normal;transform:scaleX(0.9663);transform-origin:0 0;">Bodies</div>
<svg style="left:461px;top:298px;" width="16" height="12" viewBox="0 0 16 12"><path d="M0.5 6 Q8 -2 15.5 6 Q8 14 0.5 6 Z" fill="#9a9a9a"/><circle cx="8" cy="6" r="2.6" fill="#ededed"/><circle cx="8" cy="6" r="1.6" fill="#9a9a9a"/></svg>
<svg style="left:486px;top:297px;" width="17" height="14" viewBox="0 0 17 14"><path d="M0.5 1.5 H6 L7 3 H16.5 V13.5 H0.5 Z" fill="#9d9d9d"/><path d="M0.5 3.5 H16.5" stroke="#ededed" stroke-width="0.8"/></svg>
<div class="t" style="left:516.00px;top:298.89px;font-size:11px;color:#333;font-weight:normal;transform:scaleX(0.9835);transform-origin:0 0;">Sketches</div>
<svg style="left:482px;top:307px;" width="90" height="5" viewBox="0 0 90 5"><path d="M2.0 4 L4.5 1 M7.6 4 L10.1 1 M13.2 4 L15.7 1 M18.8 4 L21.3 1 M24.4 4 L26.9 1 M30.0 4 L32.5 1 M35.6 4 L38.1 1 M41.2 4 L43.7 1 M46.8 4 L49.3 1 M52.4 4 L54.9 1 M58.0 4 L60.5 1 M63.6 4 L66.1 1 M69.2 4 L71.7 1 M74.8 4 L77.3 1 M80.4 4 L82.9 1 M86.0 4 L88.5 1" stroke="#3d6aa8" stroke-width="1.4" opacity="0.85"/></svg>
<svg style="left:461px;top:322px;" width="16" height="12" viewBox="0 0 16 12"><path d="M0.5 6 Q8 -2 15.5 6 Q8 14 0.5 6 Z" fill="#9a9a9a"/><circle cx="8" cy="6" r="2.6" fill="#ededed"/><circle cx="8" cy="6" r="1.6" fill="#9a9a9a"/></svg>
<svg style="left:486px;top:320px;" width="17" height="17" viewBox="0 0 17 17"><path d="M1.5 3 Q1.5 0.8 3.5 0.8 H7 Q9 0.8 9 3 V7.5 H13 Q15.5 7.5 15.5 9.8 V14 Q15.5 16 13.5 16 H3.5 Q1.5 16 1.5 14 Z" fill="#fff" stroke="#333" stroke-width="1.1"/><path d="M9 7.5 V16 M1.5 10.5 H9" stroke="#333" stroke-width="0.9"/><rect x="2.5" y="4" width="5.5" height="5.5" fill="#dde2ea"/><rect x="10" y="10" width="4.5" height="5" fill="#dde2ea"/></svg>
<svg style="left:510px;top:321px;" width="17" height="15" viewBox="0 0 17 15"><path d="M7 4.5 L9.5 2 Q11.5 0 13.8 2 Q16 4.3 14 6.5 L11 9.5 Q9 11.5 6.8 9.3" stroke="#333" stroke-width="1.8" fill="none" stroke-linecap="round"/><path d="M10 10.5 L7.5 13 Q5.5 15 3.2 13 Q1 10.7 3 8.5 L6 5.5 Q8 3.5 10.2 5.7" stroke="#333" stroke-width="1.8" fill="none" stroke-linecap="round"/></svg>
<div class="t" style="left:541.00px;top:322.89px;font-size:11px;color:#333;font-weight:normal;transform:scaleX(0.9689);transform-origin:0 0;">ComparatronGear v4:1</div>
<div class="a" style="left:404px;top:961px;width:300px;height:25px;border:1px solid #cfcfcf;background:#f2f2f2"></div>
<div class="t" style="left:429.00px;top:967.99px;font-size:11px;color:#555;font-weight:normal;transform:scaleX(0.8884);transform-origin:0 0;">COMMENTS</div>
<svg style="left:682px;top:968px;" width="10" height="10" viewBox="0 0 10 10"><circle cx="5" cy="5" r="4.6" fill="#333"/><path d="M2.3 5 H7.7 M5 2.3 V7.7" stroke="#fff" stroke-width="1.5"/></svg>
<div class="a" style="left:699px;top:968px;width:1px;height:11px;background:#aaa;"></div>
<div class="a" style="left:701px;top:968px;width:1px;height:11px;background:#aaa;"></div>
<svg style="left:411px;top:1007px;" width="13" height="15" viewBox="0 0 13 15"><rect x="0" y="0.5" width="2" height="14" fill="#444"/><path d="M12 1 V14 L2.5 7.5 Z" fill="#444"/></svg>
<svg style="left:435px;top:1008px;" width="13" height="14" viewBox="0 0 13 14"><path d="M9 0.5 V13.5 L0.5 7 Z" fill="#444"/><rect x="10" y="4" width="2" height="6" fill="#444"/></svg>
<svg style="left:461px;top:1007px;" width="12" height="16" viewBox="0 0 12 16"><path d="M0.5 0.5 V15.5 L11.5 8 Z" fill="#444"/></svg>
<svg style="left:484px;top:1008px;" width="13" height="14" viewBox="0 0 13 14"><rect x="0" y="4" width="2" height="6" fill="#444"/><path d="M3 0.5 V13.5 L12 7 Z" fill="#444"/></svg>
<svg style="left:510px;top:1007px;" width="13" height="15" viewBox="0 0 13 15"><path d="M0.5 1 V14 L10 7.5 Z" fill="#444"/><rect x="10.5" y="0.5" width="2" height="14" fill="#444"/></svg>
<svg style="left:540px;top:1005px;" width="1240" height="22" viewBox="0 0 1240 22"><g transform="translate(4,0)"><rect x="1.5" y="2.5" width="12" height="12" fill="none" stroke="#555" stroke-width="1"/><rect x="0" y="1" width="3" height="3" fill="#1e88e5"/><rect x="12" y="1" width="3" height="3" fill="#1e88e5"/><rect x="0" y="13" width="3" height="3" fill="#1e88e5"/><rect x="8" y="9" width="10" height="10" fill="#f2f2f2"/><path d="M9 17 L15.5 10.5 L17.5 12.5 L11 19 Z" fill="#f5b840"/><path d="M15.5 10.5 L16.5 9.5 L18.5 11.5 L17.5 12.5 Z" fill="#f0604a"/><path d="M9 17 L11 19 L8.2 19.5 Z" fill="#555"/></g><g transform="translate(28,0)"><path d="M1 5 L4.5 2 H13 V14.5 L10 17.5 H1 Z" fill="#3b8fd8"/><path d="M1 5 L4.5 2 H13 L10 5 Z" fill="#8cc6f4"/><path d="M10 5 H1 V17.5 H10 Z" fill="#5aa8ec"/><path d="M1 17.8 H10 L13 14.8 V16.5 L10.5 19 H1 Z" fill="#c8c8c8"/><path d="M16.5 3 V15" stroke="#333" stroke-width="1.1"/><path d="M14.5 5 L16.5 1.5 L18.5 5 Z" fill="#333"/></g><g transform="translate(52,0)"><rect x="1.5" y="2.5" width="12" height="12" fill="none" stroke="#555" stroke-width="1"/><rect x="0" y="1" width="3" height="3" fill="#1e88e5"/><rect x="12" y="1" width="3" height="3" fill="#1e88e5"/><rect x="0" y="13" width="3" height="3" fill="#1e88e5"/><rect x="8" y="9" width="10" height="10" fill="#f2f2f2"/><path d="M9 17 L15.5 10.5 L17.5 12.5 L11 19 Z" fill="#f5b840"/><path d="M15.5 10.5 L16.5 9.5 L18.5 11.5 L17.5 12.5 Z" fill="#f0604a"/><path d="M9 17 L11 19 L8.2 19.5 Z" fill="#555"/></g><g transform="translate(76,0)"><path d="M1 5 L4.5 2 H13 V14.5 L10 17.5 H1 Z" fill="#3b8fd8"/><path d="M1 5 L4.5 2 H13 L10 5 Z" fill="#8cc6f4"/><path d="M10 5 H1 V17.5 H10 Z" fill="#5aa8ec"/><path d="M1 17.8 H10 L13 14.8 V16.5 L10.5 19 H1 Z" fill="#c8c8c8"/><path d="M16.5 3 V15" stroke="#333" stroke-width="1.1"/><path d="M14.5 5 L16.5 1.5 L18.5 5 Z" fill="#333"/></g><g transform="translate(100,0)"><rect x="1.5" y="2.5" width="12" height="12" fill="none" stroke="#555" stroke-width="1"/><rect x="0" y="1" width="3" height="3" fill="#1e88e5"/><rect x="12" y="1" width="3" height="3" fill="#1e88e5"/><rect x="0" y="13" width="3" height="3" fill="#1e88e5"/><rect x="8" y="9" width="10" height="10" fill="#f2f2f2"/><path d="M9 17 L15.5 10.5 L17.5 12.5 L11 19 Z" fill="#f5b840"/><path d="M15.5 10.5 L16.5 9.5 L18.5 11.5 L17.5 12.5 Z" fill="#f0604a"/><path d="M9 17 L11 19 L8.2 19.5 Z" fill="#555"/></g><g transform="translate(124,0)"><path d="M1 5 L4.5 2 H13 V14.5 L10 17.5 H1 Z" fill="#3b8fd8"/><path d="M1 5 L4.5 2 H13 L10 5 Z" fill="#8cc6f4"/><path d="M10 5 H1 V17.5 H10 Z" fill="#5aa8ec"/><path d="M1 17.8 H10 L13 14.8 V16.5 L10.5 19 H1 Z" fill="#c8c8c8"/><path d="M16.5 3 V15" stroke="#333" stroke-width="1.1"/><path d="M14.5 5 L16.5 1.5 L18.5 5 Z" fill="#333"/></g><g transform="translate(148,0)"><rect x="1.5" y="2.5" width="12" height="12" fill="none" stroke="#555" stroke-width="1"/><rect x="0" y="1" width="3" height="3" fill="#1e88e5"/><rect x="12" y="1" width="3" height="3" fill="#1e88e5"/><rect x="0" y="13" width="3" height="3" fill="#1e88e5"/><rect x="8" y="9" width="10" height="10" fill="#f2f2f2"/><path d="M9 17 L15.5 10.5 L17.5 12.5 L11 19 Z" fill="#f5b840"/><path d="M15.5 10.5 L16.5 9.5 L18.5 11.5 L17.5 12.5 Z" fill="#f0604a"/><path d="M9 17 L11 19 L8.2 19.5 Z" fill="#555"/></g><g transform="translate(172,0)"><path d="M1 5 L4.5 2 H13 V14.5 L10 17.5 H1 Z" fill="#3b8fd8"/><path d="M1 5 L4.5 2 H13 L10 5 Z" fill="#8cc6f4"/><path d="M10 5 H1 V17.5 H10 Z" fill="#5aa8ec"/><path d="M1 17.8 H10 L13 14.8 V16.5 L10.5 19 H1 Z" fill="#c8c8c8"/><path d="M16.5 3 V15" stroke="#333" stroke-width="1.1"/><path d="M14.5 5 L16.5 1.5 L18.5 5 Z" fill="#333"/></g><g transform="translate(196,0)"><rect x="1.5" y="2.5" width="12" height="12" fill="none" stroke="#555" stroke-width="1"/><rect x="0" y="1" width="3" height="3" fill="#1e88e5"/><rect x="12" y="1" width="3" height="3" fill="#1e88e5"/><rect x="0" y="13" width="3" height="3" fill="#1e88e5"/><rect x="8" y="9" width="10" height="10" fill="#f2f2f2"/><path d="M9 17 L15.5 10.5 L17.5 12.5 L11 19 Z" fill="#f5b840"/><path d="M15.5 10.5 L16.5 9.5 L18.5 11.5 L17.5 12.5 Z" fill="#f0604a"/><path d="M9 17 L11 19 L8.2 19.5 Z" fill="#555"/></g><g transform="translate(220,0)"><path d="M1 5 L4.5 2 H13 V14.5 L10 17.5 H1 Z" fill="#3b8fd8"/><path d="M1 5 L4.5 2 H13 L10 5 Z" fill="#8cc6f4"/><path d="M10 5 H1 V17.5 H10 Z" fill="#5aa8ec"/><path d="M1 17.8 H10 L13 14.8 V16.5 L10.5 19 H1 Z" fill="#c8c8c8"/><path d="M16.5 3 V15" stroke="#333" stroke-width="1.1"/><path d="M14.5 5 L16.5 1.5 L18.5 5 Z" fill="#333"/></g><g transform="translate(244,0)"><path d="M2.5 5 L5.7 1.8 H10 Q17.3 2.5 17.3 9.5 V13.2 L14.2 16.3 H2.5 Z" fill="#dcdcdc" stroke="#555" stroke-width="1.1" stroke-linejoin="round"/><path d="M10.5 1.5 Q18.2 2.5 18.5 9.5 L15.8 10 Q15.5 5.2 9.5 4.2 Z" fill="#5aa8e6"/><path d="M15.5 12 L17.3 10.5 V13.2 L14.2 16.3 Z" fill="#b8b8b8"/></g><g transform="translate(268,0)"><rect x="1.5" y="2.5" width="12" height="12" fill="none" stroke="#555" stroke-width="1"/><rect x="0" y="1" width="3" height="3" fill="#1e88e5"/><rect x="12" y="1" width="3" height="3" fill="#1e88e5"/><rect x="0" y="13" width="3" height="3" fill="#1e88e5"/><rect x="8" y="9" width="10" height="10" fill="#f2f2f2"/><path d="M9 17 L15.5 10.5 L17.5 12.5 L11 19 Z" fill="#f5b840"/><path d="M15.5 10.5 L16.5 9.5 L18.5 11.5 L17.5 12.5 Z" fill="#f0604a"/><path d="M9 17 L11 19 L8.2 19.5 Z" fill="#555"/></g><g transform="translate(292,0)"><path d="M1 5 L4.5 2 H13 V14.5 L10 17.5 H1 Z" fill="#3b8fd8"/><path d="M1 5 L4.5 2 H13 L10 5 Z" fill="#8cc6f4"/><path d="M10 5 H1 V17.5 H10 Z" fill="#5aa8ec"/><path d="M1 17.8 H10 L13 14.8 V16.5 L10.5 19 H1 Z" fill="#c8c8c8"/><path d="M16.5 3 V15" stroke="#333" stroke-width="1.1"/><path d="M14.5 5 L16.5 1.5 L18.5 5 Z" fill="#333"/></g><g transform="translate(316,0)"><rect x="1.5" y="2.5" width="12" height="12" fill="none" stroke="#555" stroke-width="1"/><rect x="0" y="1" width="3" height="3" fill="#1e88e5"/><rect x="12" y="1" width="3" height="3" fill="#1e88e5"/><rect x="0" y="13" width="3" height="3" fill="#1e88e5"/><rect x="8" y="9" width="10" height="10" fill="#f2f2f2"/><path d="M9 17 L15.5 10.5 L17.5 12.5 L11 19 Z" fill="#f5b840"/><path d="M15.5 10.5 L16.5 9.5 L18.5 11.5 L17.5 12.5 Z" fill="#f0604a"/><path d="M9 17 L11 19 L8.2 19.5 Z" fill="#555"/></g><g transform="translate(340,0)"><path d="M1 5 L4.5 2 H13 V14.5 L10 17.5 H1 Z" fill="#3b8fd8"/><path d="M1 5 L4.5 2 H13 L10 5 Z" fill="#8cc6f4"/><path d="M10 5 H1 V17.5 H10 Z" fill="#5aa8ec"/><path d="M1 17.8 H10 L13 14.8 V16.5 L10.5 19 H1 Z" fill="#c8c8c8"/><path d="M16.5 3 V15" stroke="#333" stroke-width="1.1"/><path d="M14.5 5 L16.5 1.5 L18.5 5 Z" fill="#333"/></g><g transform="translate(364,0)"><path d="M2.5 5 L5.7 1.8 H10 Q17.3 2.5 17.3 9.5 V13.2 L14.2 16.3 H2.5 Z" fill="#dcdcdc" stroke="#555" stroke-width="1.1" stroke-linejoin="round"/><path d="M10.5 1.5 Q18.2 2.5 18.5 9.5 L15.8 10 Q15.5 5.2 9.5 4.2 Z" fill="#5aa8e6"/><path d="M15.5 12 L17.3 10.5 V13.2 L14.2 16.3 Z" fill="#b8b8b8"/></g><g transform="translate(388,0)"><rect x="1.5" y="2.5" width="12" height="12" fill="none" stroke="#555" stroke-width="1"/><rect x="0" y="1" width="3" height="3" fill="#1e88e5"/><rect x="12" y="1" width="3" height="3" fill="#1e88e5"/><rect x="0" y="13" width="3" height="3" fill="#1e88e5"/><rect x="8" y="9" width="10" height="10" fill="#f2f2f2"/><path d="M9 17 L15.5 10.5 L17.5 12.5 L11 19 Z" fill="#f5b840"/><path d="M15.5 10.5 L16.5 9.5 L18.5 11.5 L17.5 12.5 Z" fill="#f0604a"/><path d="M9 17 L11 19 L8.2 19.5 Z" fill="#555"/></g><g transform="translate(412,0)"><path d="M3 4 L6 1.5 H17 V15 L14 18 H3 Z" fill="#e0e0e0" stroke="#666" stroke-width="1"/><path d="M7.5 9.5 L10 7 Q11.5 5.5 13 7 Q14.5 8.5 13 10 L11 12 M10 10 L7.5 12.5 Q6 14 4.5 12.5 Q3 11 4.5 9.5 L6.5 7.5" stroke="#777" stroke-width="1.2" fill="none"/></g><g transform="translate(436,0)"><rect x="1.5" y="2.5" width="5" height="16" fill="#fff" stroke="#444" stroke-width="1"/><rect x="6.5" y="2.5" width="12" height="7" fill="#3d8fe0"/><path d="M6.5 2.5 H18.5" stroke="#444" stroke-width="0.6"/></g><g transform="translate(460,0)"><rect x="1.5" y="2.5" width="12" height="12" fill="none" stroke="#555" stroke-width="1"/><rect x="0" y="1" width="3" height="3" fill="#1e88e5"/><rect x="12" y="1" width="3" height="3" fill="#1e88e5"/><rect x="0" y="13" width="3" height="3" fill="#1e88e5"/><rect x="8" y="9" width="10" height="10" fill="#f2f2f2"/><path d="M9 17 L15.5 10.5 L17.5 12.5 L11 19 Z" fill="#f5b840"/><path d="M15.5 10.5 L16.5 9.5 L18.5 11.5 L17.5 12.5 Z" fill="#f0604a"/><path d="M9 17 L11 19 L8.2 19.5 Z" fill="#555"/></g><g transform="translate(484,0)"><path d="M1 5 L4.5 2 H13 V14.5 L10 17.5 H1 Z" fill="#3b8fd8"/><path d="M1 5 L4.5 2 H13 L10 5 Z" fill="#8cc6f4"/><path d="M10 5 H1 V17.5 H10 Z" fill="#5aa8ec"/><path d="M1 17.8 H10 L13 14.8 V16.5 L10.5 19 H1 Z" fill="#c8c8c8"/><path d="M16.5 3 V15" stroke="#333" stroke-width="1.1"/><path d="M14.5 5 L16.5 1.5 L18.5 5 Z" fill="#333"/></g><g transform="translate(508,0)"><rect x="1.5" y="2.5" width="5" height="16" fill="#fff" stroke="#444" stroke-width="1"/><rect x="6.5" y="2.5" width="12" height="7" fill="#3d8fe0"/><path d="M6.5 2.5 H18.5" stroke="#444" stroke-width="0.6"/></g><g transform="translate(532,0)"><rect x="1" y="2" width="3.5" height="3.5" fill="none" stroke="#555" stroke-width="0.9"/><rect x="13" y="2" width="4" height="4" fill="#3d8fe0"/><rect x="1" y="13" width="4" height="4" fill="#3d8fe0"/><rect x="13" y="13" width="4" height="4" fill="#3d8fe0"/><path d="M6.5 3.8 H11 M6.5 15 H11" stroke="#3d8fe0" stroke-width="1.4"/></g><g transform="translate(556,0)"><rect x="1" y="2" width="3.5" height="3.5" fill="none" stroke="#555" stroke-width="0.9"/><rect x="13" y="2" width="4" height="4" fill="#3d8fe0"/><rect x="1" y="13" width="4" height="4" fill="#3d8fe0"/><rect x="13" y="13" width="4" height="4" fill="#3d8fe0"/><path d="M6.5 3.8 H11 M6.5 15 H11" stroke="#3d8fe0" stroke-width="1.4"/></g><g transform="translate(580,0)"><rect x="1.5" y="2.5" width="12" height="12" fill="none" stroke="#555" stroke-width="1"/><rect x="0" y="1" width="3" height="3" fill="#1e88e5"/><rect x="12" y="1" width="3" height="3" fill="#1e88e5"/><rect x="0" y="13" width="3" height="3" fill="#1e88e5"/><rect x="8" y="9" width="10" height="10" fill="#f2f2f2"/><path d="M9 17 L15.5 10.5 L17.5 12.5 L11 19 Z" fill="#f5b840"/><path d="M15.5 10.5 L16.5 9.5 L18.5 11.5 L17.5 12.5 Z" fill="#f0604a"/><path d="M9 17 L11 19 L8.2 19.5 Z" fill="#555"/></g><g transform="translate(604,0)"><path d="M1 5 L4.5 2 H13 V14.5 L10 17.5 H1 Z" fill="#3b8fd8"/><path d="M1 5 L4.5 2 H13 L10 5 Z" fill="#8cc6f4"/><path d="M10 5 H1 V17.5 H10 Z" fill="#5aa8ec"/><path d="M1 17.8 H10 L13 14.8 V16.5 L10.5 19 H1 Z" fill="#c8c8c8"/><path d="M16.5 3 V15" stroke="#333" stroke-width="1.1"/><path d="M14.5 5 L16.5 1.5 L18.5 5 Z" fill="#333"/></g><g transform="translate(628,0)"><rect x="1.5" y="2.5" width="12" height="12" fill="none" stroke="#555" stroke-width="1"/><rect x="0" y="1" width="3" height="3" fill="#1e88e5"/><rect x="12" y="1" width="3" height="3" fill="#1e88e5"/><rect x="0" y="13" width="3" height="3" fill="#1e88e5"/><rect x="8" y="9" width="10" height="10" fill="#f2f2f2"/><path d="M9 17 L15.5 10.5 L17.5 12.5 L11 19 Z" fill="#f5b840"/><path d="M15.5 10.5 L16.5 9.5 L18.5 11.5 L17.5 12.5 Z" fill="#f0604a"/><path d="M9 17 L11 19 L8.2 19.5 Z" fill="#555"/></g><g transform="translate(652,0)"><path d="M1 5 L4.5 2 H13 V14.5 L10 17.5 H1 Z" fill="#3b8fd8"/><path d="M1 5 L4.5 2 H13 L10 5 Z" fill="#8cc6f4"/><path d="M10 5 H1 V17.5 H10 Z" fill="#5aa8ec"/><path d="M1 17.8 H10 L13 14.8 V16.5 L10.5 19 H1 Z" fill="#c8c8c8"/><path d="M16.5 3 V15" stroke="#333" stroke-width="1.1"/><path d="M14.5 5 L16.5 1.5 L18.5 5 Z" fill="#333"/></g><g transform="translate(676,0)"><rect x="1.5" y="2.5" width="12" height="12" fill="none" stroke="#555" stroke-width="1"/><rect x="0" y="1" width="3" height="3" fill="#1e88e5"/><rect x="12" y="1" width="3" height="3" fill="#1e88e5"/><rect x="0" y="13" width="3" height="3" fill="#1e88e5"/><rect x="8" y="9" width="10" height="10" fill="#f2f2f2"/><path d="M9 17 L15.5 10.5 L17.5 12.5 L11 19 Z" fill="#f5b840"/><path d="M15.5 10.5 L16.5 9.5 L18.5 11.5 L17.5 12.5 Z" fill="#f0604a"/><path d="M9 17 L11 19 L8.2 19.5 Z" fill="#555"/></g><g transform="translate(700,0)"><path d="M1 5 L4.5 2 H13 V14.5 L10 17.5 H1 Z" fill="#3b8fd8"/><path d="M1 5 L4.5 2 H13 L10 5 Z" fill="#8cc6f4"/><path d="M10 5 H1 V17.5 H10 Z" fill="#5aa8ec"/><path d="M1 17.8 H10 L13 14.8 V16.5 L10.5 19 H1 Z" fill="#c8c8c8"/><path d="M16.5 3 V15" stroke="#333" stroke-width="1.1"/><path d="M14.5 5 L16.5 1.5 L18.5 5 Z" fill="#333"/></g><g transform="translate(724,0)"><rect x="1.5" y="2.5" width="12" height="12" fill="none" stroke="#555" stroke-width="1"/><rect x="0" y="1" width="3" height="3" fill="#1e88e5"/><rect x="12" y="1" width="3" height="3" fill="#1e88e5"/><rect x="0" y="13" width="3" height="3" fill="#1e88e5"/><rect x="8" y="9" width="10" height="10" fill="#f2f2f2"/><path d="M9 17 L15.5 10.5 L17.5 12.5 L11 19 Z" fill="#f5b840"/><path d="M15.5 10.5 L16.5 9.5 L18.5 11.5 L17.5 12.5 Z" fill="#f0604a"/><path d="M9 17 L11 19 L8.2 19.5 Z" fill="#555"/></g><g transform="translate(748,0)"><path d="M1 5 L4.5 2 H13 V14.5 L10 17.5 H1 Z" fill="#3b8fd8"/><path d="M1 5 L4.5 2 H13 L10 5 Z" fill="#8cc6f4"/><path d="M10 5 H1 V17.5 H10 Z" fill="#5aa8ec"/><path d="M1 17.8 H10 L13 14.8 V16.5 L10.5 19 H1 Z" fill="#c8c8c8"/><path d="M16.5 3 V15" stroke="#333" stroke-width="1.1"/><path d="M14.5 5 L16.5 1.5 L18.5 5 Z" fill="#333"/></g><g transform="translate(772,0)"><path d="M2.5 5 L5.7 1.8 H10 Q17.3 2.5 17.3 9.5 V13.2 L14.2 16.3 H2.5 Z" fill="#dcdcdc" stroke="#555" stroke-width="1.1" stroke-linejoin="round"/><path d="M10.5 1.5 Q18.2 2.5 18.5 9.5 L15.8 10 Q15.5 5.2 9.5 4.2 Z" fill="#5aa8e6"/><path d="M15.5 12 L17.3 10.5 V13.2 L14.2 16.3 Z" fill="#b8b8b8"/></g><g transform="translate(796,0)"><path d="M2.5 5 L5.7 1.8 H10 Q17.3 2.5 17.3 9.5 V13.2 L14.2 16.3 H2.5 Z" fill="#dcdcdc" stroke="#555" stroke-width="1.1" stroke-linejoin="round"/><path d="M10.5 1.5 Q18.2 2.5 18.5 9.5 L15.8 10 Q15.5 5.2 9.5 4.2 Z" fill="#5aa8e6"/><path d="M15.5 12 L17.3 10.5 V13.2 L14.2 16.3 Z" fill="#b8b8b8"/></g><g transform="translate(820,0)"><path d="M2.5 5 L5.7 1.8 H10 Q17.3 2.5 17.3 9.5 V13.2 L14.2 16.3 H2.5 Z" fill="#dcdcdc" stroke="#555" stroke-width="1.1" stroke-linejoin="round"/><path d="M10.5 1.5 Q18.2 2.5 18.5 9.5 L15.8 10 Q15.5 5.2 9.5 4.2 Z" fill="#5aa8e6"/><path d="M15.5 12 L17.3 10.5 V13.2 L14.2 16.3 Z" fill="#b8b8b8"/></g><g transform="translate(844,0)"><rect x="1.5" y="2.5" width="12" height="12" fill="none" stroke="#555" stroke-width="1"/><rect x="0" y="1" width="3" height="3" fill="#1e88e5"/><rect x="12" y="1" width="3" height="3" fill="#1e88e5"/><rect x="0" y="13" width="3" height="3" fill="#1e88e5"/><rect x="8" y="9" width="10" height="10" fill="#f2f2f2"/><path d="M9 17 L15.5 10.5 L17.5 12.5 L11 19 Z" fill="#f5b840"/><path d="M15.5 10.5 L16.5 9.5 L18.5 11.5 L17.5 12.5 Z" fill="#f0604a"/><path d="M9 17 L11 19 L8.2 19.5 Z" fill="#555"/></g><g transform="translate(868,0)"><path d="M1 5 L4.5 2 H13 V14.5 L10 17.5 H1 Z" fill="#3b8fd8"/><path d="M1 5 L4.5 2 H13 L10 5 Z" fill="#8cc6f4"/><path d="M10 5 H1 V17.5 H10 Z" fill="#5aa8ec"/><path d="M1 17.8 H10 L13 14.8 V16.5 L10.5 19 H1 Z" fill="#c8c8c8"/><path d="M16.5 3 V15" stroke="#333" stroke-width="1.1"/><path d="M14.5 5 L16.5 1.5 L18.5 5 Z" fill="#333"/></g><g transform="translate(892,0)"><path d="M2.5 5 L5.7 1.8 H10 Q17.3 2.5 17.3 9.5 V13.2 L14.2 16.3 H2.5 Z" fill="#dcdcdc" stroke="#555" stroke-width="1.1" stroke-linejoin="round"/><path d="M10.5 1.5 Q18.2 2.5 18.5 9.5 L15.8 10 Q15.5 5.2 9.5 4.2 Z" fill="#5aa8e6"/><path d="M15.5 12 L17.3 10.5 V13.2 L14.2 16.3 Z" fill="#b8b8b8"/></g><g transform="translate(916,0)"><path d="M2.5 5 L5.7 1.8 H10 Q17.3 2.5 17.3 9.5 V13.2 L14.2 16.3 H2.5 Z" fill="#dcdcdc" stroke="#555" stroke-width="1.1" stroke-linejoin="round"/><path d="M10.5 1.5 Q18.2 2.5 18.5 9.5 L15.8 10 Q15.5 5.2 9.5 4.2 Z" fill="#5aa8e6"/><path d="M15.5 12 L17.3 10.5 V13.2 L14.2 16.3 Z" fill="#b8b8b8"/></g><g transform="translate(940,0)"><rect x="1.5" y="2.5" width="12" height="12" fill="none" stroke="#555" stroke-width="1"/><rect x="0" y="1" width="3" height="3" fill="#1e88e5"/><rect x="12" y="1" width="3" height="3" fill="#1e88e5"/><rect x="0" y="13" width="3" height="3" fill="#1e88e5"/><rect x="8" y="9" width="10" height="10" fill="#f2f2f2"/><path d="M9 17 L15.5 10.5 L17.5 12.5 L11 19 Z" fill="#f5b840"/><path d="M15.5 10.5 L16.5 9.5 L18.5 11.5 L17.5 12.5 Z" fill="#f0604a"/><path d="M9 17 L11 19 L8.2 19.5 Z" fill="#555"/></g><g transform="translate(964,0)"><path d="M1 5 L4.5 2 H13 V14.5 L10 17.5 H1 Z" fill="#3b8fd8"/><path d="M1 5 L4.5 2 H13 L10 5 Z" fill="#8cc6f4"/><path d="M10 5 H1 V17.5 H10 Z" fill="#5aa8ec"/><path d="M1 17.8 H10 L13 14.8 V16.5 L10.5 19 H1 Z" fill="#c8c8c8"/><path d="M16.5 3 V15" stroke="#333" stroke-width="1.1"/><path d="M14.5 5 L16.5 1.5 L18.5 5 Z" fill="#333"/></g><g transform="translate(988,0)"><rect x="1.5" y="2.5" width="12" height="12" fill="none" stroke="#555" stroke-width="1"/><rect x="0" y="1" width="3" height="3" fill="#1e88e5"/><rect x="12" y="1" width="3" height="3" fill="#1e88e5"/><rect x="0" y="13" width="3" height="3" fill="#1e88e5"/><rect x="8" y="9" width="10" height="10" fill="#f2f2f2"/><path d="M9 17 L15.5 10.5 L17.5 12.5 L11 19 Z" fill="#f5b840"/><path d="M15.5 10.5 L16.5 9.5 L18.5 11.5 L17.5 12.5 Z" fill="#f0604a"/><path d="M9 17 L11 19 L8.2 19.5 Z" fill="#555"/></g><g transform="translate(1012,0)"><path d="M1 5 L4.5 2 H13 V14.5 L10 17.5 H1 Z" fill="#3b8fd8"/><path d="M1 5 L4.5 2 H13 L10 5 Z" fill="#8cc6f4"/><path d="M10 5 H1 V17.5 H10 Z" fill="#5aa8ec"/><path d="M1 17.8 H10 L13 14.8 V16.5 L10.5 19 H1 Z" fill="#c8c8c8"/><path d="M16.5 3 V15" stroke="#333" stroke-width="1.1"/><path d="M14.5 5 L16.5 1.5 L18.5 5 Z" fill="#333"/></g><g transform="translate(1036,0)"><rect x="1.5" y="2.5" width="12" height="12" fill="none" stroke="#555" stroke-width="1"/><rect x="0" y="1" width="3" height="3" fill="#1e88e5"/><rect x="12" y="1" width="3" height="3" fill="#1e88e5"/><rect x="0" y="13" width="3" height="3" fill="#1e88e5"/><rect x="8" y="9" width="10" height="10" fill="#f2f2f2"/><path d="M9 17 L15.5 10.5 L17.5 12.5 L11 19 Z" fill="#f5b840"/><path d="M15.5 10.5 L16.5 9.5 L18.5 11.5 L17.5 12.5 Z" fill="#f0604a"/><path d="M9 17 L11 19 L8.2 19.5 Z" fill="#555"/></g><g transform="translate(1060,0)"><path d="M1 5 L4.5 2 H13 V14.5 L10 17.5 H1 Z" fill="#3b8fd8"/><path d="M1 5 L4.5 2 H13 L10 5 Z" fill="#8cc6f4"/><path d="M10 5 H1 V17.5 H10 Z" fill="#5aa8ec"/><path d="M1 17.8 H10 L13 14.8 V16.5 L10.5 19 H1 Z" fill="#c8c8c8"/><path d="M16.5 3 V15" stroke="#333" stroke-width="1.1"/><path d="M14.5 5 L16.5 1.5 L18.5 5 Z" fill="#333"/></g><g transform="translate(1084,0)"><path d="M2.5 5 L5.7 1.8 H10 Q17.3 2.5 17.3 9.5 V13.2 L14.2 16.3 H2.5 Z" fill="#dcdcdc" stroke="#555" stroke-width="1.1" stroke-linejoin="round"/><path d="M10.5 1.5 Q18.2 2.5 18.5 9.5 L15.8 10 Q15.5 5.2 9.5 4.2 Z" fill="#5aa8e6"/><path d="M15.5 12 L17.3 10.5 V13.2 L14.2 16.3 Z" fill="#b8b8b8"/></g><g transform="translate(1108,0)"><rect x="1.5" y="2.5" width="12" height="12" fill="none" stroke="#555" stroke-width="1"/><rect x="0" y="1" width="3" height="3" fill="#1e88e5"/><rect x="12" y="1" width="3" height="3" fill="#1e88e5"/><rect x="0" y="13" width="3" height="3" fill="#1e88e5"/><rect x="8" y="9" width="10" height="10" fill="#f2f2f2"/><path d="M9 17 L15.5 10.5 L17.5 12.5 L11 19 Z" fill="#f5b840"/><path d="M15.5 10.5 L16.5 9.5 L18.5 11.5 L17.5 12.5 Z" fill="#f0604a"/><path d="M9 17 L11 19 L8.2 19.5 Z" fill="#555"/></g><g transform="translate(1132,0)"><path d="M1 5 L4.5 2 H13 V14.5 L10 17.5 H1 Z" fill="#3b8fd8"/><path d="M1 5 L4.5 2 H13 L10 5 Z" fill="#8cc6f4"/><path d="M10 5 H1 V17.5 H10 Z" fill="#5aa8ec"/><path d="M1 17.8 H10 L13 14.8 V16.5 L10.5 19 H1 Z" fill="#c8c8c8"/><path d="M16.5 3 V15" stroke="#333" stroke-width="1.1"/><path d="M14.5 5 L16.5 1.5 L18.5 5 Z" fill="#333"/></g><g transform="translate(1156,0)"><path d="M2.5 5 L5.7 1.8 H10 Q17.3 2.5 17.3 9.5 V13.2 L14.2 16.3 H2.5 Z" fill="#dcdcdc" stroke="#555" stroke-width="1.1" stroke-linejoin="round"/><path d="M10.5 1.5 Q18.2 2.5 18.5 9.5 L15.8 10 Q15.5 5.2 9.5 4.2 Z" fill="#5aa8e6"/><path d="M15.5 12 L17.3 10.5 V13.2 L14.2 16.3 Z" fill="#b8b8b8"/></g><g transform="translate(1180,0)"><path d="M2.5 5 L5.7 1.8 H10 Q17.3 2.5 17.3 9.5 V13.2 L14.2 16.3 H2.5 Z" fill="#dcdcdc" stroke="#555" stroke-width="1.1" stroke-linejoin="round"/><path d="M10.5 1.5 Q18.2 2.5 18.5 9.5 L15.8 10 Q15.5 5.2 9.5 4.2 Z" fill="#5aa8e6"/><path d="M15.5 12 L17.3 10.5 V13.2 L14.2 16.3 Z" fill="#b8b8b8"/></g><g transform="translate(1204,0)"><path d="M2.5 5 L5.7 1.8 H10 Q17.3 2.5 17.3 9.5 V13.2 L14.2 16.3 H2.5 Z" fill="#dcdcdc" stroke="#555" stroke-width="1.1" stroke-linejoin="round"/><path d="M10.5 1.5 Q18.2 2.5 18.5 9.5 L15.8 10 Q15.5 5.2 9.5 4.2 Z" fill="#5aa8e6"/><path d="M15.5 12 L17.3 10.5 V13.2 L14.2 16.3 Z" fill="#b8b8b8"/></g></svg>
<div class="a" style="left:553px;top:1029px;width:1208px;height:2px;background:#cfcfcf;"></div>
<div class="a" style="left:553px;top:1024px;width:1.5px;height:6px;background:#cfcfcf;"></div>
<div class="a" style="left:577px;top:1024px;width:1.5px;height:6px;background:#cfcfcf;"></div>
<div class="a" style="left:601px;top:1024px;width:1.5px;height:6px;background:#cfcfcf;"></div>
<div class="a" style="left:625px;top:1024px;width:1.5px;height:6px;background:#cfcfcf;"></div>
<div class="a" style="left:649px;top:1024px;width:1.5px;height:6px;background:#cfcfcf;"></div>
<div class="a" style="left:673px;top:1024px;width:1.5px;height:6px;background:#cfcfcf;"></div>
<div class="a" style="left:697px;top:1024px;width:1.5px;height:6px;background:#cfcfcf;"></div>
<div class="a" style="left:721px;top:1024px;width:1.5px;height:6px;background:#cfcfcf;"></div>
<div class="a" style="left:745px;top:1024px;width:1.5px;height:6px;background:#cfcfcf;"></div>
<div class="a" style="left:769px;top:1024px;width:1.5px;height:6px;background:#cfcfcf;"></div>
<div class="a" style="left:793px;top:1024px;width:1.5px;height:6px;background:#cfcfcf;"></div>
<div class="a" style="left:817px;top:1024px;width:1.5px;height:6px;background:#cfcfcf;"></div>
<div class="a" style="left:841px;top:1024px;width:1.5px;height:6px;background:#cfcfcf;"></div>
<div class="a" style="left:865px;top:1024px;width:1.5px;height:6px;background:#cfcfcf;"></div>
<div class="a" style="left:889px;top:1024px;width:1.5px;height:6px;background:#cfcfcf;"></div>
<div class="a" style="left:913px;top:1024px;width:1.5px;height:6px;background:#cfcfcf;"></div>
<div class="a" style="left:937px;top:1024px;width:1.5px;height:6px;background:#cfcfcf;"></div>
<div class="a" style="left:961px;top:1024px;width:1.5px;height:6px;background:#cfcfcf;"></div>
<div class="a" style="left:985px;top:1024px;width:1.5px;height:6px;background:#cfcfcf;"></div>
<div class="a" style="left:1009px;top:1024px;width:1.5px;height:6px;background:#cfcfcf;"></div>
<div class="a" style="left:1033px;top:1024px;width:1.5px;height:6px;background:#cfcfcf;"></div>
<div class="a" style="left:1057px;top:1024px;width:1.5px;height:6px;background:#cfcfcf;"></div>
<div class="a" style="left:1081px;top:1024px;width:1.5px;height:6px;background:#cfcfcf;"></div>
<div class="a" style="left:1105px;top:1024px;width:1.5px;height:6px;background:#cfcfcf;"></div>
<div class="a" style="left:1129px;top:1024px;width:1.5px;height:6px;background:#cfcfcf;"></div>
<div class="a" style="left:1153px;top:1024px;width:1.5px;height:6px;background:#cfcfcf;"></div>
<div class="a" style="left:1177px;top:1024px;width:1.5px;height:6px;background:#cfcfcf;"></div>
<div class="a" style="left:1201px;top:1024px;width:1.5px;height:6px;background:#cfcfcf;"></div>
<div class="a" style="left:1225px;top:1024px;width:1.5px;height:6px;background:#cfcfcf;"></div>
<div class="a" style="left:1249px;top:1024px;width:1.5px;height:6px;background:#cfcfcf;"></div>
<div class="a" style="left:1273px;top:1024px;width:1.5px;height:6px;background:#cfcfcf;"></div>
<div class="a" style="left:1297px;top:1024px;width:1.5px;height:6px;background:#cfcfcf;"></div>
<div class="a" style="left:1321px;top:1024px;width:1.5px;height:6px;background:#cfcfcf;"></div>
<div class="a" style="left:1345px;top:1024px;width:1.5px;height:6px;background:#cfcfcf;"></div>
<div class="a" style="left:1369px;top:1024px;width:1.5px;height:6px;background:#cfcfcf;"></div>
<div class="a" style="left:1393px;top:1024px;width:1.5px;height:6px;background:#cfcfcf;"></div>
<div class="a" style="left:1417px;top:1024px;width:1.5px;height:6px;background:#cfcfcf;"></div>
<div class="a" style="left:1441px;top:1024px;width:1.5px;height:6px;background:#cfcfcf;"></div>
<div class="a" style="left:1465px;top:1024px;width:1.5px;height:6px;background:#cfcfcf;"></div>
<div class="a" style="left:1489px;top:1024px;width:1.5px;height:6px;background:#cfcfcf;"></div>
<div class="a" style="left:1513px;top:1024px;width:1.5px;height:6px;background:#cfcfcf;"></div>
<div class="a" style="left:1537px;top:1024px;width:1.5px;height:6px;background:#cfcfcf;"></div>
<div class="a" style="left:1561px;top:1024px;width:1.5px;height:6px;background:#cfcfcf;"></div>
<div class="a" style="left:1585px;top:1024px;width:1.5px;height:6px;background:#cfcfcf;"></div>
<div class="a" style="left:1609px;top:1024px;width:1.5px;height:6px;background:#cfcfcf;"></div>
<div class="a" style="left:1633px;top:1024px;width:1.5px;height:6px;background:#cfcfcf;"></div>
<div class="a" style="left:1657px;top:1024px;width:1.5px;height:6px;background:#cfcfcf;"></div>
<div class="a" style="left:1681px;top:1024px;width:1.5px;height:6px;background:#cfcfcf;"></div>
<div class="a" style="left:1705px;top:1024px;width:1.5px;height:6px;background:#cfcfcf;"></div>
<div class="a" style="left:1729px;top:1024px;width:1.5px;height:6px;background:#cfcfcf;"></div>
<div class="a" style="left:1753px;top:1024px;width:1.5px;height:6px;background:#cfcfcf;"></div>
<svg style="left:1756px;top:1000px;" width="18" height="31" viewBox="0 0 18 31"><path d="M1 0.5 H17 V3 L11 8.5 V30.5 H7.5 V8.5 L1 3 Z" fill="#555"/></svg>
<svg style="left:1889px;top:1006px;" width="18" height="18" viewBox="0 0 18 18"><polygon points="8.17,0.54 9.83,0.54 10.78,3.14 11.88,3.60 14.39,2.43 15.57,3.61 14.40,6.12 14.86,7.22 17.46,8.17 17.46,9.83 14.86,10.78 14.40,11.88 15.57,14.39 14.39,15.57 11.88,14.40 10.78,14.86 9.83,17.46 8.17,17.46 7.22,14.86 6.12,14.40 3.61,15.57 2.43,14.39 3.60,11.88 3.14,10.78 0.54,9.83 0.54,8.17 3.14,7.22 3.60,6.12 2.43,3.61 3.61,2.43 6.12,3.60 7.22,3.14" fill="#8a8a8a"/><circle cx="9" cy="9" r="5.27" fill="#8a8a8a"/><circle cx="9" cy="9" r="3.00" fill="#f2f2f2"/></svg>
<div class="a" style="left:1041px;top:962px;width:237px;height:24px;background:#efefef;"></div>
<svg style="left:1044px;top:965px;" width="30" height="17" viewBox="0 0 30 17"><ellipse cx="8" cy="8.5" rx="6.8" ry="4" fill="none" stroke="#555" stroke-width="1.2"/><path d="M8 2 Q3.5 8.5 8 15" fill="none" stroke="#555" stroke-width="1.2"/><circle cx="8" cy="8.5" r="1.5" fill="#555"/><path d="M22 7 H28 L25 10.5 Z" fill="#444"/></svg>
<svg style="left:1076px;top:965px;" width="18" height="17" viewBox="0 0 18 17"><rect x="1.5" y="6" width="15" height="10" fill="none" stroke="#555" stroke-width="1.3"/><rect x="4" y="8.5" width="10" height="5" fill="none" stroke="#555" stroke-width="1"/><path d="M4 5.5 L6 1.5 H12 L14 5.5" stroke="#555" stroke-width="1.2" fill="none"/></svg>
<svg style="left:1102px;top:964px;" width="18" height="18" viewBox="0 0 18 18"><path d="M5 16.5 Q2 13 2 9 V6.5 Q2 5.3 3 5.3 Q4 5.3 4 6.5 V9 V3 Q4 1.8 5.2 1.8 Q6.3 1.8 6.3 3 V8 V2 Q6.3 0.8 7.5 0.8 Q8.6 0.8 8.6 2 V8 V3 Q8.6 1.8 9.8 1.8 Q11 1.8 11 3 V9.5 L12.5 7.5 Q13.5 6.5 14.5 7.3 Q15.3 8 14.5 9.3 L11.5 15 Q10.5 16.5 9 16.5 Z" fill="#f6f6f6" stroke="#444" stroke-width="1.1"/></svg>
<svg style="left:1128px;top:965px;" width="18" height="17" viewBox="0 0 18 17"><circle cx="6.8" cy="9" r="5" fill="none" stroke="#444" stroke-width="1.5"/><path d="M10.5 12.5 L15 16.5" stroke="#444" stroke-width="2.2"/><path d="M13 1 V6 M10.5 3.5 H15.5" stroke="#444" stroke-width="1.1"/></svg>
<svg style="left:1154px;top:964px;" width="30" height="18" viewBox="0 0 30 18"><rect x="0.8" y="0.8" width="14" height="13" fill="none" stroke="#444" stroke-width="1" stroke-dasharray="2 1.3"/><circle cx="8" cy="8" r="5" fill="none" stroke="#444" stroke-width="1.5"/><path d="M11.5 11.5 L16 16" stroke="#444" stroke-width="2.2"/><path d="M20 7 H26 L23 10.5 Z" fill="#444"/></svg>
<svg style="left:1187px;top:965px;" width="28" height="17" viewBox="0 0 28 17"><rect x="0.8" y="1" width="15" height="10.5" fill="#6a8ab0" stroke="#444" stroke-width="1.1"/><rect x="2.5" y="2.7" width="11.6" height="7" fill="#a8c4e4"/><path d="M6 12 V14.5 M11 12 V14.5 M4 15 H13" stroke="#444" stroke-width="1.3"/><path d="M19 7 H25 L22 10.5 Z" fill="#444"/></svg>
<svg style="left:1218px;top:965px;" width="28" height="17" viewBox="0 0 28 17"><rect x="0.8" y="0.8" width="15.5" height="15.5" fill="none" stroke="#444" stroke-width="1"/><path d="M3.9 0.8 V16.3 M0.8 3.9 H16.3" stroke="#444" stroke-width="0.8"/><path d="M7.0 0.8 V16.3 M0.8 7.0 H16.3" stroke="#444" stroke-width="0.8"/><path d="M10.1 0.8 V16.3 M0.8 10.1 H16.3" stroke="#444" stroke-width="0.8"/><path d="M13.2 0.8 V16.3 M0.8 13.2 H16.3" stroke="#444" stroke-width="0.8"/><path d="M19 7 H25 L22 10.5 Z" fill="#444"/></svg>
<svg style="left:1249px;top:965px;" width="28" height="17" viewBox="0 0 28 17"><rect x="0.8" y="1.8" width="15" height="13" fill="none" stroke="#444" stroke-width="1.1"/><rect x="2.4" y="3.4" width="5" height="4" fill="#6a96d0"/><rect x="9.2" y="3.4" width="5" height="4" fill="#6a96d0"/><rect x="2.4" y="9.2" width="5" height="4" fill="#6a96d0"/><rect x="9.2" y="9.2" width="5" height="4" fill="#6a96d0"/><path d="M19 7 H25 L22 10.5 Z" fill="#444"/></svg>
<svg style="left:0px;top:0px;" width="1920" height="1040" viewBox="0 0 1920 1040"><defs>
<radialGradient id="gshadow" cx="1008" cy="265" r="95" gradientUnits="userSpaceOnUse"><stop offset="0" stop-color="#5a201c" stop-opacity="0.75"/><stop offset="0.55" stop-color="#6a2420" stop-opacity="0.35"/><stop offset="1" stop-color="#8d3129" stop-opacity="0"/></radialGradient>
<linearGradient id="ringtop" x1="1030" y1="0" x2="1335" y2="0" gradientUnits="userSpaceOnUse"><stop offset="0" stop-color="#97392f"/><stop offset="0.5" stop-color="#8f342c"/><stop offset="1" stop-color="#842e27"/></linearGradient>
<linearGradient id="groove" x1="0" y1="545" x2="0" y2="630" gradientUnits="userSpaceOnUse"><stop offset="0" stop-color="#a54036"/><stop offset="0.35" stop-color="#b65248"/><stop offset="1" stop-color="#96372e"/></linearGradient>
<linearGradient id="wall" x1="1040" y1="0" x2="1335" y2="0" gradientUnits="userSpaceOnUse"><stop offset="0" stop-color="#9a3b32"/><stop offset="0.6" stop-color="#8a3029"/><stop offset="1" stop-color="#7f2c26"/></linearGradient>
<linearGradient id="innerface" x1="1050" y1="300" x2="1150" y2="460" gradientUnits="userSpaceOnUse"><stop offset="0" stop-color="#6f3a35"/><stop offset="1" stop-color="#7a4742"/></linearGradient>
<linearGradient id="fil" x1="1120" y1="500" x2="1200" y2="470" gradientUnits="userSpaceOnUse"><stop offset="0" stop-color="#8a2f28"/><stop offset="0.5" stop-color="#b04c42"/><stop offset="1" stop-color="#a33b31"/></linearGradient>
<linearGradient id="pocket" x1="930" y1="0" x2="971" y2="0" gradientUnits="userSpaceOnUse"><stop offset="0" stop-color="#7c2b25"/><stop offset="1" stop-color="#8c332b"/></linearGradient>
<radialGradient id="recess" cx="1000" cy="790" r="70" gradientUnits="userSpaceOnUse"><stop offset="0" stop-color="#5e221e"/><stop offset="1" stop-color="#8d3129" stop-opacity="0"/></radialGradient>
<linearGradient id="bar" x1="985" y1="0" x2="1105" y2="0" gradientUnits="userSpaceOnUse"><stop offset="0" stop-color="#a04a43"/><stop offset="0.4" stop-color="#b8706a"/><stop offset="1" stop-color="#8c4a44"/></linearGradient>
<radialGradient id="hole" cx="0.45" cy="0.25" r="0.75"><stop offset="0" stop-color="#4e1b18"/><stop offset="0.45" stop-color="#7a2b25"/><stop offset="1" stop-color="#9a3c34"/></radialGradient>
<radialGradient id="backreg" cx="995" cy="765" r="80" gradientUnits="userSpaceOnUse"><stop offset="0" stop-color="#64231f"/><stop offset="0.6" stop-color="#7a2b25"/><stop offset="1" stop-color="#8a3029"/></radialGradient>
<linearGradient id="floor" x1="950" y1="715" x2="950" y2="750" gradientUnits="userSpaceOnUse"><stop offset="0" stop-color="#4e1c19"/><stop offset="1" stop-color="#7a2b25"/></linearGradient>
<linearGradient id="filr" x1="1000" y1="560" x2="1020" y2="600" gradientUnits="userSpaceOnUse"><stop offset="0" stop-color="#9c3a31"/><stop offset="0.45" stop-color="#b4574d"/><stop offset="1" stop-color="#a63f35"/></linearGradient>
</defs><path d="M1003.8 155.5 L1025.4 167.8 L1175 443.8 Q1196 482 1230 497.5 L1471.3 636.3 Q1477.5 640 1477.5 647.5 L1477.5 716 L1451 729 L1447.5 733.8 L1335.3 669.4 C1330 665 1315 650 1308.5 645.2 C1295 636 1285 630 1273.8 624.4 C1255 615 1240 609 1222 607 C1200 605 1185 604 1170 604.5 L1166 606 L1118.5 692.9 L1145.4 699.6 L1253 761.5 Q1259.8 765 1259.8 772.3 L1259.8 843.7 L1234 859.8 L1231.6 862.5 L1022 855.3 L875 940 L853.8 928.3 L853.8 807.7 Q853.8 797 856 790.8 L927.8 604.3 L960 587 Q966 582 966.2 576 L966.2 571.5 L974.6 563.5 L966.3 558.8 L966.3 553.0 L974.4 544.8 L966.3 539.3 L966.3 533.5 L974.4 525.4 L966.3 519.9 L966.3 514.1 L974.4 505.9 L966.3 500.4 L966.3 494.6 L974.4 486.5 L966.3 480.9 L966.3 475.1 L974.4 467.0 L966.3 461.5 L966.3 455.7 L974.4 447.5 L966.3 442.0 L966.3 436.2 L974.4 428.1 L966.3 422.6 L966.3 416.8 L974.4 408.6 L966.3 403.1 L966.3 397.3 L974.4 389.2 L966.3 383.6 L966.3 377.8 L974.4 369.7 L966.3 364.2 L966.3 358.4 L974.4 350.2 L966.3 344.7 L966.3 338.9 L974.4 330.8 L966.3 325.3 L966.3 319.5 L974.4 311.3 L966.3 305.8 L966.3 300.0 L974.4 291.9 L966.3 286.3 L966.3 280.5 L974.4 272.4 L966.3 266.9 L966.3 261.1 L974.4 252.9 L966.3 247.4 L966.3 241.6 L974.4 233.5 L966.3 228.0 L966.3 222.2 L974.4 214.0 L966.3 208.5 L966.3 202.7 L974.4 194.5 L966 185.8 L966.2 182.7 L980 168.8 Z" fill="#8d3129" stroke="none" stroke-width="0.9" stroke-linejoin="round" /><path d="M999 182 L1025.4 167.8 L1175 443.8 L1000 443.8 Z" fill="url(#gshadow)" stroke="none" stroke-width="0.9" stroke-linejoin="round" /><path d="M980.0 168.8 L1003.8 155.5 L1025.4 167.8 L999.2 181.6 Z" fill="#aa3f35" stroke="#1c0d0b" stroke-width="0.9" stroke-linejoin="round" /><path d="M966.2 182.7 L980.0 168.8 L999.2 181.6 L987.7 195.0 L966.0 185.8 Z" fill="#a83e34" stroke="#1c0d0b" stroke-width="0.9" stroke-linejoin="round" /><path d="M987.7 195.0 L987.7 198.5" fill="none" stroke="#1c0d0b" stroke-width="0.9" stroke-linejoin="round" stroke-linecap="round"/><path d="M966.3 202.7 L974.4 194.5 L987.4 200.8 L996.0 199.8 L999.9 199.5 L999.9 202.9 L987.4 215.0 Z" fill="#a83e34" stroke="#1c0d0b" stroke-width="0.85" stroke-linejoin="round" /><path d="M966.3 202.7 L987.4 215.0 L987.4 220.1 L966.3 208.5 Z" fill="#8e3129" stroke="#1c0d0b" stroke-width="0.85" stroke-linejoin="round" /><path d="M996.0 199.8 L999.9 199.5 L999.9 202.9 Z" fill="#6e2722" stroke="#1c0d0b" stroke-width="0.6" stroke-linejoin="round" /><path d="M966.3 222.2 L974.4 214.0 L987.4 220.3 L996.0 219.3 L999.9 219.0 L999.9 222.4 L987.4 234.5 Z" fill="#a83e34" stroke="#1c0d0b" stroke-width="0.85" stroke-linejoin="round" /><path d="M966.3 222.2 L987.4 234.5 L987.4 239.6 L966.3 228.0 Z" fill="#8e3129" stroke="#1c0d0b" stroke-width="0.85" stroke-linejoin="round" /><path d="M996.0 219.3 L999.9 219.0 L999.9 222.4 Z" fill="#6e2722" stroke="#1c0d0b" stroke-width="0.6" stroke-linejoin="round" /><path d="M966.3 241.6 L974.4 233.5 L987.4 239.7 L996.0 238.7 L999.9 238.4 L999.9 241.8 L987.4 253.9 Z" fill="#a83e34" stroke="#1c0d0b" stroke-width="0.85" stroke-linejoin="round" /><path d="M966.3 241.6 L987.4 253.9 L987.4 259.0 L966.3 247.4 Z" fill="#8e3129" stroke="#1c0d0b" stroke-width="0.85" stroke-linejoin="round" /><path d="M996.0 238.7 L999.9 238.4 L999.9 241.8 Z" fill="#6e2722" stroke="#1c0d0b" stroke-width="0.6" stroke-linejoin="round" /><path d="M966.3 261.1 L974.4 252.9 L987.4 259.2 L996.0 258.2 L999.9 257.9 L999.9 261.3 L987.4 273.4 Z" fill="#a83e34" stroke="#1c0d0b" stroke-width="0.85" stroke-linejoin="round" /><path d="M966.3 261.1 L987.4 273.4 L987.4 278.5 L966.3 266.9 Z" fill="#8e3129" stroke="#1c0d0b" stroke-width="0.85" stroke-linejoin="round" /><path d="M996.0 258.2 L999.9 257.9 L999.9 261.3 Z" fill="#6e2722" stroke="#1c0d0b" stroke-width="0.6" stroke-linejoin="round" /><path d="M966.3 280.5 L974.4 272.4 L987.4 278.6 L996.0 277.6 L999.9 277.3 L999.9 280.7 L987.4 292.8 Z" fill="#a83e34" stroke="#1c0d0b" stroke-width="0.85" stroke-linejoin="round" /><path d="M966.3 280.5 L987.4 292.8 L987.4 297.9 L966.3 286.3 Z" fill="#8e3129" stroke="#1c0d0b" stroke-width="0.85" stroke-linejoin="round" /><path d="M996.0 277.6 L999.9 277.3 L999.9 280.7 Z" fill="#6e2722" stroke="#1c0d0b" stroke-width="0.6" stroke-linejoin="round" /><path d="M966.3 300.0 L974.4 291.9 L987.4 298.1 L996.0 297.1 L999.9 296.8 L999.9 300.2 L987.4 312.3 Z" fill="#a83e34" stroke="#1c0d0b" stroke-width="0.85" stroke-linejoin="round" /><path d="M966.3 300.0 L987.4 312.3 L987.4 317.4 L966.3 305.8 Z" fill="#8e3129" stroke="#1c0d0b" stroke-width="0.85" stroke-linejoin="round" /><path d="M996.0 297.1 L999.9 296.8 L999.9 300.2 Z" fill="#6e2722" stroke="#1c0d0b" stroke-width="0.6" stroke-linejoin="round" /><path d="M966.3 319.5 L974.4 311.3 L987.4 317.6 L996.0 316.6 L999.9 316.3 L999.9 319.7 L987.4 331.8 Z" fill="#a83e34" stroke="#1c0d0b" stroke-width="0.85" stroke-linejoin="round" /><path d="M966.3 319.5 L987.4 331.8 L987.4 336.9 L966.3 325.3 Z" fill="#8e3129" stroke="#1c0d0b" stroke-width="0.85" stroke-linejoin="round" /><path d="M996.0 316.6 L999.9 316.3 L999.9 319.7 Z" fill="#6e2722" stroke="#1c0d0b" stroke-width="0.6" stroke-linejoin="round" /><path d="M966.3 338.9 L974.4 330.8 L987.4 337.0 L996.0 336.0 L999.9 335.7 L999.9 339.1 L987.4 351.2 Z" fill="#a83e34" stroke="#1c0d0b" stroke-width="0.85" stroke-linejoin="round" /><path d="M966.3 338.9 L987.4 351.2 L987.4 356.3 L966.3 344.7 Z" fill="#8e3129" stroke="#1c0d0b" stroke-width="0.85" stroke-linejoin="round" /><path d="M996.0 336.0 L999.9 335.7 L999.9 339.1 Z" fill="#6e2722" stroke="#1c0d0b" stroke-width="0.6" stroke-linejoin="round" /><path d="M966.3 358.4 L974.4 350.2 L987.4 356.5 L996.0 355.5 L999.9 355.2 L999.9 358.6 L987.4 370.7 Z" fill="#a83e34" stroke="#1c0d0b" stroke-width="0.85" stroke-linejoin="round" /><path d="M966.3 358.4 L987.4 370.7 L987.4 375.8 L966.3 364.2 Z" fill="#8e3129" stroke="#1c0d0b" stroke-width="0.85" stroke-linejoin="round" /><path d="M996.0 355.5 L999.9 355.2 L999.9 358.6 Z" fill="#6e2722" stroke="#1c0d0b" stroke-width="0.6" stroke-linejoin="round" /><path d="M966.3 377.8 L974.4 369.7 L987.4 375.9 L996.0 374.9 L999.9 374.6 L999.9 378.0 L987.4 390.1 Z" fill="#a83e34" stroke="#1c0d0b" stroke-width="0.85" stroke-linejoin="round" /><path d="M966.3 377.8 L987.4 390.1 L987.4 395.2 L966.3 383.6 Z" fill="#8e3129" stroke="#1c0d0b" stroke-width="0.85" stroke-linejoin="round" /><path d="M996.0 374.9 L999.9 374.6 L999.9 378.0 Z" fill="#6e2722" stroke="#1c0d0b" stroke-width="0.6" stroke-linejoin="round" /><path d="M966.3 397.3 L974.4 389.2 L987.4 395.4 L996.0 394.4 L999.9 394.1 L999.9 397.5 L987.4 409.6 Z" fill="#a83e34" stroke="#1c0d0b" stroke-width="0.85" stroke-linejoin="round" /><path d="M966.3 397.3 L987.4 409.6 L987.4 414.7 L966.3 403.1 Z" fill="#8e3129" stroke="#1c0d0b" stroke-width="0.85" stroke-linejoin="round" /><path d="M996.0 394.4 L999.9 394.1 L999.9 397.5 Z" fill="#6e2722" stroke="#1c0d0b" stroke-width="0.6" stroke-linejoin="round" /><path d="M966.3 416.8 L974.4 408.6 L987.4 414.9 L996.0 413.9 L999.9 413.6 L999.9 417.0 L987.4 429.1 Z" fill="#a83e34" stroke="#1c0d0b" stroke-width="0.85" stroke-linejoin="round" /><path d="M966.3 416.8 L987.4 429.1 L987.4 434.2 L966.3 422.6 Z" fill="#8e3129" stroke="#1c0d0b" stroke-width="0.85" stroke-linejoin="round" /><path d="M996.0 413.9 L999.9 413.6 L999.9 417.0 Z" fill="#6e2722" stroke="#1c0d0b" stroke-width="0.6" stroke-linejoin="round" /><path d="M966.3 436.2 L974.4 428.1 L987.4 434.3 L996.0 433.3 L999.9 433.0 L999.9 436.4 L987.4 448.5 Z" fill="#a83e34" stroke="#1c0d0b" stroke-width="0.85" stroke-linejoin="round" /><path d="M966.3 436.2 L987.4 448.5 L987.4 453.6 L966.3 442.0 Z" fill="#8e3129" stroke="#1c0d0b" stroke-width="0.85" stroke-linejoin="round" /><path d="M996.0 433.3 L999.9 433.0 L999.9 436.4 Z" fill="#6e2722" stroke="#1c0d0b" stroke-width="0.6" stroke-linejoin="round" /><path d="M966.3 455.7 L974.4 447.5 L987.4 453.8 L996.0 452.8 L999.9 452.5 L999.9 455.9 L987.4 468.0 Z" fill="#a83e34" stroke="#1c0d0b" stroke-width="0.85" stroke-linejoin="round" /><path d="M966.3 455.7 L987.4 468.0 L987.4 473.1 L966.3 461.5 Z" fill="#8e3129" stroke="#1c0d0b" stroke-width="0.85" stroke-linejoin="round" /><path d="M996.0 452.8 L999.9 452.5 L999.9 455.9 Z" fill="#6e2722" stroke="#1c0d0b" stroke-width="0.6" stroke-linejoin="round" /><path d="M966.3 475.1 L974.4 467.0 L987.4 473.2 L996.0 472.2 L999.9 471.9 L999.9 475.3 L987.4 487.4 Z" fill="#a83e34" stroke="#1c0d0b" stroke-width="0.85" stroke-linejoin="round" /><path d="M966.3 475.1 L987.4 487.4 L987.4 492.5 L966.3 480.9 Z" fill="#8e3129" stroke="#1c0d0b" stroke-width="0.85" stroke-linejoin="round" /><path d="M996.0 472.2 L999.9 471.9 L999.9 475.3 Z" fill="#6e2722" stroke="#1c0d0b" stroke-width="0.6" stroke-linejoin="round" /><path d="M966.3 494.6 L974.4 486.5 L987.4 492.7 L996.0 491.7 L999.9 491.4 L999.9 494.8 L987.4 506.9 Z" fill="#a83e34" stroke="#1c0d0b" stroke-width="0.85" stroke-linejoin="round" /><path d="M966.3 494.6 L987.4 506.9 L987.4 512.0 L966.3 500.4 Z" fill="#8e3129" stroke="#1c0d0b" stroke-width="0.85" stroke-linejoin="round" /><path d="M996.0 491.7 L999.9 491.4 L999.9 494.8 Z" fill="#6e2722" stroke="#1c0d0b" stroke-width="0.6" stroke-linejoin="round" /><path d="M966.3 514.1 L974.4 505.9 L987.4 512.2 L996.0 511.2 L999.9 510.9 L999.9 514.3 L987.4 526.4 Z" fill="#a83e34" stroke="#1c0d0b" stroke-width="0.85" stroke-linejoin="round" /><path d="M966.3 514.1 L987.4 526.4 L987.4 531.5 L966.3 519.9 Z" fill="#8e3129" stroke="#1c0d0b" stroke-width="0.85" stroke-linejoin="round" /><path d="M996.0 511.2 L999.9 510.9 L999.9 514.3 Z" fill="#6e2722" stroke="#1c0d0b" stroke-width="0.6" stroke-linejoin="round" /><path d="M966.3 533.5 L974.4 525.4 L987.4 531.6 L996.0 530.6 L999.9 530.3 L999.9 533.7 L987.4 545.8 Z" fill="#a83e34" stroke="#1c0d0b" stroke-width="0.85" stroke-linejoin="round" /><path d="M966.3 533.5 L987.4 545.8 L987.4 550.9 L966.3 539.3 Z" fill="#8e3129" stroke="#1c0d0b" stroke-width="0.85" stroke-linejoin="round" /><path d="M996.0 530.6 L999.9 530.3 L999.9 533.7 Z" fill="#6e2722" stroke="#1c0d0b" stroke-width="0.6" stroke-linejoin="round" /><path d="M966.3 553.0 L974.4 544.8 L987.4 551.1 L996.0 550.1 L999.9 549.8 L999.9 553.2 L987.4 565.3 Z" fill="#a83e34" stroke="#1c0d0b" stroke-width="0.85" stroke-linejoin="round" /><path d="M966.3 553.0 L987.4 565.3 L987.4 570.4 L966.3 558.8 Z" fill="#8e3129" stroke="#1c0d0b" stroke-width="0.85" stroke-linejoin="round" /><path d="M996.0 550.1 L999.9 549.8 L999.9 553.2 Z" fill="#6e2722" stroke="#1c0d0b" stroke-width="0.6" stroke-linejoin="round" /><path d="M966.2 571.5 L1000 590.8 L1007 575.4 L1003 570.4 L995.4 547.7 L1025.4 532 Q1026 544 1028.5 546 C1030 575 1028 600 1027.7 614 L1015.4 618.5 L960.8 587.7 Q966 582 966.2 575 Z" fill="#a0392f" stroke="none" stroke-width="0.9" stroke-linejoin="round" /><path d="M995.4 547.7 L1025.4 532 Q1026 544 1028.5 546 C1030 575 1028 600 1027.7 614 L1015.4 618.5 L1000 590.8 L1007 575.4 L1003 570.4 L990 570.8 L987.4 565.3 L999.9 549.8 Z" fill="url(#filr)" stroke="none" stroke-width="0.9" stroke-linejoin="round" /><path d="M995.4 547.7 L1025.4 532.0" fill="none" stroke="#1c0d0b" stroke-width="0.9" stroke-linejoin="round" stroke-linecap="round"/><path d="M966.2 571.5 L974.6 563.5 L990.0 570.8 L1003.0 570.4 L1007.0 573.0 L1007.0 575.4 L1000.0 590.8 Z" fill="#a83e34" stroke="#1c0d0b" stroke-width="0.85" stroke-linejoin="round" /><path d="M966.2 571.5 L1000.0 590.8 L1000.0 593.5 L966.2 575.5 Z" fill="#8e3129" stroke="#1c0d0b" stroke-width="0.7" stroke-linejoin="round" /><path d="M960.0 587.0 L1015.4 618.5 L1027.7 614.0" fill="none" stroke="#1c0d0b" stroke-width="0.9" stroke-linejoin="round" stroke-linecap="round"/><path d="M1000.0 590.8 L1015.4 618.5" fill="none" stroke="#1c0d0b" stroke-width="0.9" stroke-linejoin="round" stroke-linecap="round"/><path d="M927.8 604.3 L960 587 L1015.4 618.5 L1027.7 614 L1043 645.4 L1047.7 650 L1078 675.4 L1118.5 692.9 L1145.4 699.6 L1253 761.5 L1228.9 775 L1000 645.8 L967 627.6 Z" fill="#aa3f35" stroke="none" stroke-width="0.9" stroke-linejoin="round" /><path d="M927.8 604.3 L967.0 627.6 L1228.9 775.0" fill="none" stroke="#1c0d0b" stroke-width="0.9" stroke-linejoin="round" stroke-linecap="round"/><path d="M1050 295.5 Q1058 292 1063 295 Q1066 297 1067 300 L1152.5 458.8 L1133.8 451 Z" fill="url(#innerface)" stroke="#1c0d0b" stroke-width="0.9" stroke-linejoin="round" /><path d="M1133.8 451 L1152.5 458.8 L1175 443.8 Q1196 482 1230 497.5 L1187.5 520 L1168.8 520 L1157.5 521 L1115 497.5 C1128 488 1131 470 1133.8 451 Z" fill="url(#fil)" stroke="none" stroke-width="0.9" stroke-linejoin="round" /><path d="M1028.5 546 L1080 516 L1115 497.5 L1157.5 521 L1097 536.2 L1050.8 562.3 C1040 548 1032 548 1028.5 546 Z" fill="#a93f35" stroke="none" stroke-width="0.9" stroke-linejoin="round" /><path d="M1152.5 458.8 L1175.0 443.8" fill="none" stroke="#1c0d0b" stroke-width="0.9" stroke-linejoin="round" stroke-linecap="round"/><path d="M1152.5 458.8 C1163 475 1166 500 1168.8 520" fill="none" stroke="#1c0d0b" stroke-width="0.9" stroke-linejoin="round" /><path d="M1115.0 497.5 L1157.5 521.0" fill="none" stroke="#1c0d0b" stroke-width="0.9" stroke-linejoin="round" stroke-linecap="round"/><path d="M1230.0 497.5 L1187.5 520.0" fill="none" stroke="#1c0d0b" stroke-width="0.9" stroke-linejoin="round" stroke-linecap="round"/><path d="M1028.5 546.0 L1080.0 516.0 L1115.0 497.5" fill="none" stroke="#1c0d0b" stroke-width="0.9" stroke-linejoin="round" stroke-linecap="round"/><path d="M1028.5 550.8 L1050.8 563 L1045.4 567.7 C1040 567 1036 560 1028.5 550.8 Z" fill="#7a2b25" stroke="#1c0d0b" stroke-width="0.8" stroke-linejoin="round" /><path d="M1168.8 520 L1187.5 520 L1230 497.5 L1471.3 636.3 Q1477.5 640 1477.5 647.5 L1445 650 L1335.3 588 C1300 550 1240 522 1170 520.6 Z" fill="#ab4036" stroke="none" stroke-width="0.9" stroke-linejoin="round" /><path d="M1230.0 497.5 L1187.5 520.0" fill="none" stroke="#1c0d0b" stroke-width="0.9" stroke-linejoin="round" stroke-linecap="round"/><path d="M1029.2 617.7 C1029.2 615.1 1028.7 608.2 1029.2 602.3 C1029.7 596.3 1030.5 587.8 1032.0 582.0 C1033.5 576.2 1035.4 571.0 1038.5 567.7 C1041.6 564.4 1041.0 567.5 1050.8 562.3 C1060.5 557.0 1079.3 543.0 1097.0 536.2 C1114.7 529.4 1136.2 523.5 1157.0 521.5 C1177.8 519.5 1202.5 521.0 1222.0 524.0 C1241.5 527.0 1259.4 534.1 1273.8 539.6 C1288.2 545.1 1299.8 551.5 1308.5 557.0 C1317.2 562.5 1321.3 567.3 1325.8 572.5 C1330.3 577.7 1333.7 585.4 1335.3 588.0 L1334.4 615.8 C1333.0 613.5 1330.1 607.5 1325.8 602.0 C1321.5 596.5 1317.2 589.1 1308.5 583.0 C1299.8 576.9 1288.2 570.4 1273.8 565.6 C1259.4 560.8 1239.3 556.8 1222.0 554.3 C1204.7 551.8 1183.2 550.9 1170.0 550.3 C1156.8 549.7 1155.2 549.3 1143.0 550.8 C1130.8 552.3 1111.3 554.7 1097.0 559.2 C1082.7 563.7 1068.2 568.0 1057.0 577.7 C1045.8 587.5 1034.5 611.0 1030.0 617.7 Z" fill="url(#ringtop)" stroke="#1c0d0b" stroke-width="0.9" stroke-linejoin="round" /><path d="M1030.0 617.7 C1034.5 611.0 1045.8 587.5 1057.0 577.7 C1068.2 568.0 1082.7 563.7 1097.0 559.2 C1111.3 554.7 1130.8 552.3 1143.0 550.8 C1155.2 549.3 1156.8 549.7 1170.0 550.3 C1183.2 550.9 1204.7 551.8 1222.0 554.3 C1239.3 556.8 1259.4 560.8 1273.8 565.6 C1288.2 570.4 1299.8 576.9 1308.5 583.0 C1317.2 589.1 1321.5 596.5 1325.8 602.0 C1330.1 607.5 1333.0 613.5 1334.4 615.8 L1334.4 615.8 C1332.1 618.1 1322.9 627.3 1320.6 629.6 L1320.6 629.6 C1318.6 627.3 1316.3 621.8 1308.5 615.8 C1300.7 609.8 1288.2 599.9 1273.8 593.3 C1259.4 586.7 1239.3 579.8 1222.0 576.0 C1204.7 572.2 1183.2 571.3 1170.0 570.8 C1156.8 570.3 1153.9 571.1 1143.0 573.0 C1132.1 574.9 1117.4 577.4 1104.6 582.3 C1091.8 587.2 1076.3 591.8 1066.0 602.3 C1055.7 612.8 1046.8 638.2 1043.0 645.4 Z" fill="url(#groove)" stroke="#1c0d0b" stroke-width="0.9" stroke-linejoin="round" /><path d="M1043.0 645.4 C1046.8 638.2 1055.7 612.8 1066.0 602.3 C1076.3 591.8 1091.8 587.2 1104.6 582.3 C1117.4 577.4 1132.1 574.9 1143.0 573.0 C1153.9 571.1 1156.8 570.3 1170.0 570.8 C1183.2 571.3 1204.7 572.2 1222.0 576.0 C1239.3 579.8 1259.4 586.7 1273.8 593.3 C1288.2 599.9 1300.7 609.8 1308.5 615.8 C1316.3 621.8 1318.6 627.3 1320.6 629.6 L1334.4 641.7 L1335.3 669.4 L1335.3 669.4 C1333.7 668.0 1330.3 664.8 1325.8 660.8 C1321.3 656.8 1317.2 651.3 1308.5 645.2 C1299.8 639.1 1288.2 630.8 1273.8 624.4 C1259.4 618.0 1239.3 610.3 1222.0 607.0 C1204.7 603.7 1183.7 604.2 1170.0 604.5 C1156.3 604.8 1150.2 607.1 1140.0 609.0 C1129.8 610.9 1118.8 613.0 1109.0 616.0 C1099.2 619.0 1091.7 621.3 1081.5 627.0 C1071.3 632.7 1053.3 646.2 1047.7 650.0 Z" fill="url(#wall)" stroke="#1c0d0b" stroke-width="0.9" stroke-linejoin="round" /><path d="M1334.4 617.5 C1326 619 1321 624 1321.4 629.6 C1321 636 1326 641 1334.4 641.7 Z" fill="#8a2f28" stroke="#1c0d0b" stroke-width="0.8" stroke-linejoin="round" /><path d="M1048 636 C1075 595 1120 575 1170 573.5 C1240 577 1290 600 1318 627" fill="none" stroke="#c98a82" stroke-width="0.7" stroke-linejoin="round" opacity="0.6"/><path d="M1045 628 C1070 590 1120 560 1175 558 C1240 560 1300 585 1325 612" fill="none" stroke="#c4665c" stroke-width="1.2" stroke-linejoin="round" opacity="0.5"/><path d="M1109.0 616.0 L1140.0 614.6 L1127.7 637.7 L1107.7 627.0 Z" fill="#6a2521" stroke="none" stroke-width="0.9" stroke-linejoin="round" /><path d="M1107.7 627.0 L1127.7 637.7 L1101.0 686.0 L1078.0 675.4 Z" fill="#7b2b25" stroke="#1c0d0b" stroke-width="0.85" stroke-linejoin="round" /><path d="M1140.0 614.6 L1166.0 606.0 L1118.5 692.9 L1101.0 686.0 L1127.7 637.7 Z" fill="#8a3029" stroke="#1c0d0b" stroke-width="0.85" stroke-linejoin="round" /><path d="M1109.0 616.0 L1127.7 637.7" fill="none" stroke="#1c0d0b" stroke-width="0.9" stroke-linejoin="round" stroke-linecap="round"/><path d="M1047.7 650 C1060 638 1085 622 1109 616 L1107.7 627 L1078 675.4 Z" fill="#fff" stroke="#1c0d0b" stroke-width="0.9" stroke-linejoin="round" /><path d="M1335.3 588 L1445 650 Q1451 652 1451 662.5 L1451 728.8 L1447.5 733.8 L1335.3 669.4 Z" fill="#8b3029" stroke="#1c0d0b" stroke-width="0.9" stroke-linejoin="round" /><path d="M1445 650 L1471.3 636.3 Q1477.5 640 1477.5 647.5 L1451 662.5 Q1451 652 1445 650 Z" fill="#ad473d" stroke="#1c0d0b" stroke-width="0.8" stroke-linejoin="round" /><path d="M1451 662.5 L1477.5 647.5 L1477.5 716 L1451 728.8 Z" fill="#933830" stroke="#1c0d0b" stroke-width="0.9" stroke-linejoin="round" /><path d="M1451.0 728.8 L1477.5 713.5" fill="none" stroke="#c07068" stroke-width="0.7" stroke-linejoin="round" stroke-linecap="round"/><ellipse cx="1415.5" cy="675.5" rx="11.5" ry="15.8" transform="rotate(-22 1415.5 675.5)" fill="url(#hole)" stroke="#1c0d0b" stroke-width="0.9"/><path d="M1230.0 497.5 L1471.3 636.3" fill="none" stroke="#1c0d0b" stroke-width="0.9" stroke-linejoin="round" stroke-linecap="round"/><path d="M1050 295.5 C1036 300 1026 318 1025.5 335 L1025.4 532 Q1026 544 1028.5 546 L1080 516 L1115 497.5 C1128 488 1131 470 1133.8 451 Z" fill="#fff" stroke="#1c0d0b" stroke-width="1.0" stroke-linejoin="round" /><path d="M927.8 604.3 L967 627.6 C945 640 930 660 927.8 673 L879 796 L856 790.8 Z" fill="#a83e34" stroke="#1c0d0b" stroke-width="0.9" stroke-linejoin="round" /><path d="M856 790.8 L879 796 L875 819.3 L853.8 807.7 Q853.8 797 856 790.8 Z" fill="#ae463c" stroke="#1c0d0b" stroke-width="0.8" stroke-linejoin="round" /><path d="M853.8 807.7 L875.0 819.3 L875.0 940.0 L853.8 928.3 Z" fill="#8e3129" stroke="#1c0d0b" stroke-width="0.9" stroke-linejoin="round" /><path d="M967 627.6 L971 628.7 L971 715.4 C955 712 935 730 927.8 752.4 L927.8 673 C930 660 945 640 967 627.6 Z" fill="url(#pocket)" stroke="#1c0d0b" stroke-width="0.9" stroke-linejoin="round" /><path d="M927.8 752.4 L984.8 719.9 L1072.7 769.6 L1051.2 811.4 L1005 812 C990 805 978 790 975.4 771.7 L928.9 799.2 Z" fill="url(#backreg)" stroke="none" stroke-width="0.9" stroke-linejoin="round" /><path d="M927.8 752.4 C935 730 955 712 971 715.4 L984.8 719.9 Z" fill="url(#floor)" stroke="#1c0d0b" stroke-width="0.9" stroke-linejoin="round" /><path d="M971.0 715.4 L984.8 719.9 L1072.7 769.6" fill="none" stroke="#1c0d0b" stroke-width="0.9" stroke-linejoin="round" stroke-linecap="round"/><path d="M928.9 799.2 L975.4 771.7 C978 790 990 805 1005 812 L983.8 824.6 L971.2 824.6 Z" fill="#a04038" stroke="#1c0d0b" stroke-width="0.9" stroke-linejoin="round" /><path d="M928.9 799.2 L971.2 824.6 L971.2 852 C950 852 935 858 928.9 862.7 Z" fill="#7f2d27" stroke="#1c0d0b" stroke-width="0.9" stroke-linejoin="round" /><path d="M983.8 824.6 L1005 812 L1105 815.4 Q1108 822 1097 830 L983.8 826 Z" fill="url(#bar)" stroke="#1c0d0b" stroke-width="0.85" stroke-linejoin="round" /><path d="M971.2 852.0 L1022.0 855.3" fill="none" stroke="#1c0d0b" stroke-width="0.9" stroke-linejoin="round" stroke-linecap="round"/><ellipse cx="896" cy="821.4" rx="11.2" ry="15" transform="rotate(-18 896 821.4)" fill="url(#hole)" stroke="#1c0d0b" stroke-width="0.9"/><ellipse cx="896" cy="904" rx="11.2" ry="15" transform="rotate(-18 896 904)" fill="url(#hole)" stroke="#1c0d0b" stroke-width="0.9"/><ellipse cx="1004" cy="759" rx="11.2" ry="15" transform="rotate(-18 1004 759)" fill="url(#hole)" stroke="#1c0d0b" stroke-width="0.9"/><path d="M1051.2 811.4 L1072.7 769.6 C1090 778 1105 795 1107.7 810 L1105 814 Z" fill="#fff" stroke="#1c0d0b" stroke-width="0.9" stroke-linejoin="round" /><path d="M1025 745.3 L1034.6 748.5 L1026 755.9 Z" fill="#fff" stroke="#1c0d0b" stroke-width="0.7" stroke-linejoin="round" /><path d="M1026 756 C1024 772 1034 782 1048 780 L1066 764" fill="none" stroke="#1c0d0b" stroke-width="0.8" stroke-linejoin="round" /><path d="M1228.9 775 L1253 761.5 Q1259.8 765 1259.8 772.3 L1233 785.8 Q1233 777 1228.9 775 Z" fill="#ad473d" stroke="#1c0d0b" stroke-width="0.8" stroke-linejoin="round" /><path d="M1233.0 785.8 L1259.8 772.3 L1259.8 843.7 L1234.0 859.8 Z" fill="#923830" stroke="#1c0d0b" stroke-width="0.9" stroke-linejoin="round" /><path d="M1234.0 859.8 L1259.8 841.0" fill="none" stroke="#c07068" stroke-width="0.7" stroke-linejoin="round" stroke-linecap="round"/><path d="M1177.7 775.0 L1197.9 773.7 L1218.0 799.2 L1218.0 826.2 L1199.0 828.9 L1177.7 802.0 Z" fill="#6e2823" stroke="#1c0d0b" stroke-width="0.9" stroke-linejoin="round" /><path d="M1181.0 781.0 L1196.0 780.0 L1213.0 801.0 L1213.0 823.0 L1200.0 825.0 L1181.0 801.0 Z" fill="#8c352d" stroke="none" stroke-width="0.9" stroke-linejoin="round" /><path d="M1177.7 802.0 L1199.0 828.9 L1218.0 826.2 L1200.0 822.0 L1182.0 800.0 Z" fill="#a5483f" stroke="#1c0d0b" stroke-width="0.7" stroke-linejoin="round" /><ellipse cx="1205" cy="805" rx="6" ry="9" transform="rotate(-25 1205 805)" fill="none" stroke="#1c0d0b" stroke-width="0.6" opacity="0.6"/><path d="M1003.8 155.5 L1025.4 167.8 L1175 443.8 Q1196 482 1230 497.5 L1471.3 636.3 Q1477.5 640 1477.5 647.5 L1477.5 716 L1451 729 L1447.5 733.8 L1335.3 669.4 C1330 665 1315 650 1308.5 645.2 C1295 636 1285 630 1273.8 624.4 C1255 615 1240 609 1222 607 C1200 605 1185 604 1170 604.5 L1166 606 L1118.5 692.9 L1145.4 699.6 L1253 761.5 Q1259.8 765 1259.8 772.3 L1259.8 843.7 L1234 859.8 L1231.6 862.5 L1022 855.3 L875 940 L853.8 928.3 L853.8 807.7 Q853.8 797 856 790.8 L927.8 604.3 L960 587 Q966 582 966.2 576 L966.2 571.5 L974.6 563.5 L966.3 558.8 L966.3 553.0 L974.4 544.8 L966.3 539.3 L966.3 533.5 L974.4 525.4 L966.3 519.9 L966.3 514.1 L974.4 505.9 L966.3 500.4 L966.3 494.6 L974.4 486.5 L966.3 480.9 L966.3 475.1 L974.4 467.0 L966.3 461.5 L966.3 455.7 L974.4 447.5 L966.3 442.0 L966.3 436.2 L974.4 428.1 L966.3 422.6 L966.3 416.8 L974.4 408.6 L966.3 403.1 L966.3 397.3 L974.4 389.2 L966.3 383.6 L966.3 377.8 L974.4 369.7 L966.3 364.2 L966.3 358.4 L974.4 350.2 L966.3 344.7 L966.3 338.9 L974.4 330.8 L966.3 325.3 L966.3 319.5 L974.4 311.3 L966.3 305.8 L966.3 300.0 L974.4 291.9 L966.3 286.3 L966.3 280.5 L974.4 272.4 L966.3 266.9 L966.3 261.1 L974.4 252.9 L966.3 247.4 L966.3 241.6 L974.4 233.5 L966.3 228.0 L966.3 222.2 L974.4 214.0 L966.3 208.5 L966.3 202.7 L974.4 194.5 L966 185.8 L966.2 182.7 L980 168.8 Z" fill="none" stroke="#1c0d0b" stroke-width="1.0" stroke-linejoin="round" /></svg>
<svg style="left:0px;top:0px;" width="1920" height="1040" viewBox="0 0 1920 1040"><path d="M934.1 209.9 L933.5 209.1 L933.1 207.1 L933.9 203.3 L934.6 199.7 L935.1 196.4 L935.2 194.0 L934.6 193.2 L933.6 193.6 L932.0 195.6 L929.9 198.6 L927.9 201.9 L925.9 205.4 L924.1 206.9 L923.0 207.3 L922.1 207.0 L921.0 205.7 L920.9 202.4 L920.5 199.3 L920.0 196.5 L919.4 194.6 L918.5 194.3 L917.6 195.3 L916.4 197.7 L915.0 201.1 L913.8 204.8 L912.6 208.6 L911.1 210.8 L910.1 211.7 L909.0 212.0 L907.5 211.7 L906.2 209.3 L904.9 207.1 L903.5 205.3 L902.2 204.3 L901.3 204.6 L900.5 205.8 L899.9 208.4 L899.5 211.7 L899.2 215.2 L899.1 218.7 L898.1 221.2 L897.2 222.5 L896.2 223.3 L894.4 224.0 L892.3 222.9 L890.2 222.1 L888.1 221.6 L886.4 221.5 L885.4 222.3 L884.9 223.7 L885.1 225.9 L885.6 228.7 L886.4 231.5 L887.4 234.1 L887.0 236.6 L886.5 238.1 L885.6 239.3 L883.8 240.9 L881.2 241.3 L878.6 241.9 L876.1 242.7 L874.3 243.6 L873.4 244.8 L873.3 246.1 L874.2 247.7 L875.6 249.5 L877.3 251.1 L879.2 252.6 L879.5 254.7 L879.4 256.1 L878.7 257.5 L877.3 259.7 L874.5 261.5 L871.9 263.5 L869.5 265.5 L867.7 267.3 L867.1 268.7 L867.4 269.8 L868.8 270.5 L870.9 271.0 L873.2 271.2 L875.8 271.2 L876.8 272.6 L877.0 273.7 L876.8 275.2 L875.8 277.7 L873.4 280.6 L871.1 283.6 L869.0 286.5 L867.7 288.9 L867.4 290.3 L868.0 291.0 L869.8 290.6 L872.3 289.8 L874.9 288.6 L877.7 287.2 L879.2 287.6 L879.8 288.3 L880.0 289.5 L879.7 292.0 L877.9 295.6 L876.3 299.2 L875.0 302.6 L874.2 305.2 L874.3 306.4 L875.2 306.5 L877.1 305.2 L879.5 303.2 L882.0 300.7 L884.6 298.1 L886.4 297.5 L887.3 297.7 L887.9 298.5 L888.3 300.5 L887.5 304.3 L886.8 307.9 L886.3 311.2 L886.2 313.6 L886.8 314.4 L887.8 314.0 L889.4 312.0 L891.5 309.0 L893.5 305.7 L895.5 302.2 L897.3 300.7 L898.4 300.3 L899.3 300.6 L900.4 301.9 L900.5 305.2 L900.9 308.3 L901.4 311.1 L902.0 313.0 L902.9 313.3 L903.8 312.3 L905.0 309.9 L906.4 306.5 L907.6 302.8 L908.8 299.0 L910.3 296.8 L911.3 295.9 L912.4 295.6 L913.9 295.9 L915.2 298.3 L916.5 300.5 L917.9 302.3 L919.2 303.3 L920.1 303.0 L920.9 301.8 L921.5 299.2 L921.9 295.9 L922.2 292.4 L922.3 288.9 L923.3 286.4 L924.2 285.1 L925.2 284.3 L927.0 283.6 L929.1 284.7 L931.2 285.5 L933.3 286.0 L935.0 286.1 L936.0 285.3 L936.5 283.9 L936.3 281.7 L935.8 278.9 L935.0 276.1 L934.0 273.5 L934.4 271.0 L934.9 269.5 L935.8 268.3 L937.6 266.7 L940.2 266.3 L942.8 265.7 L945.3 264.9 L947.1 264.0 L948.0 262.8 L948.1 261.5 L947.2 259.9 L945.8 258.1 L944.1 256.5 L942.2 255.0 L941.9 252.9 L942.0 251.5 L942.7 250.1 L944.1 247.9 L946.9 246.1 L949.5 244.1 L951.9 242.1 L953.7 240.3 L954.3 238.9 L954.0 237.8 L952.6 237.1 L950.5 236.6 L948.2 236.4 L945.6 236.4 L944.6 235.0 L944.4 233.9 L944.6 232.4 L945.6 229.9 L948.0 227.0 L950.3 224.0 L952.4 221.1 L953.7 218.7 L954.0 217.3 L953.4 216.6 L951.6 217.0 L949.1 217.8 L946.5 219.0 L943.7 220.4 L942.2 220.0 L941.6 219.3 L941.4 218.1 L941.7 215.6 L943.5 212.0 L945.1 208.4 L946.4 205.0 L947.2 202.4 L947.1 201.2 L946.2 201.1 L944.3 202.4 L941.9 204.4 L939.4 206.9 L936.8 209.5 L935.0 210.1 Z" fill="#3c7536" stroke="#10200e" stroke-width="1.8"/><path d="M995.9 344.3 L997.2 345.3 L919.2 303.3 L917.9 302.3 Z" fill="#264b22" stroke="#264b22" stroke-width="0.5"/><path d="M1032.0 279.8 L1030.6 279.1 L952.6 237.1 L954.0 237.8 Z" fill="#54904c" stroke="#54904c" stroke-width="0.5"/><path d="M994.5 342.5 L995.9 344.3 L917.9 302.3 L916.5 300.5 Z" fill="#2d5629" stroke="#2d5629" stroke-width="0.5"/><path d="M1030.6 279.1 L1028.5 278.6 L950.5 236.6 L952.6 237.1 Z" fill="#599951" stroke="#599951" stroke-width="0.5"/><path d="M993.2 340.3 L994.5 342.5 L916.5 300.5 L915.2 298.3 Z" fill="#315c2d" stroke="#315c2d" stroke-width="0.5"/><path d="M1028.5 278.6 L1026.2 278.4 L948.2 236.4 L950.5 236.6 Z" fill="#5a9a52" stroke="#5a9a52" stroke-width="0.5"/><path d="M991.9 337.9 L993.2 340.3 L915.2 298.3 L913.9 295.9 Z" fill="#356230" stroke="#356230" stroke-width="0.5"/><path d="M1026.2 278.4 L1023.6 278.4 L945.6 236.4 L948.2 236.4 Z" fill="#5a9a52" stroke="#5a9a52" stroke-width="0.5"/><path d="M979.4 353.1 L980.0 355.0 L902.0 313.0 L901.4 311.1 Z" fill="#3a6a35" stroke="#3a6a35" stroke-width="0.5"/><path d="M1031.4 258.6 L1029.6 259.0 L951.6 217.0 L953.4 216.6 Z" fill="#5a9a52" stroke="#5a9a52" stroke-width="0.5"/><path d="M978.9 350.3 L979.4 353.1 L901.4 311.1 L900.9 308.3 Z" fill="#40723a" stroke="#40723a" stroke-width="0.5"/><path d="M1029.6 259.0 L1027.1 259.8 L949.1 217.8 L951.6 217.0 Z" fill="#5a9a52" stroke="#5a9a52" stroke-width="0.5"/><path d="M978.5 347.2 L978.9 350.3 L900.9 308.3 L900.5 305.2 Z" fill="#42763c" stroke="#42763c" stroke-width="0.5"/><path d="M1027.1 259.8 L1024.5 261.0 L946.5 219.0 L949.1 217.8 Z" fill="#5a9a52" stroke="#5a9a52" stroke-width="0.5"/><path d="M978.4 343.9 L978.5 347.2 L900.5 305.2 L900.4 301.9 Z" fill="#45793e" stroke="#45793e" stroke-width="0.5"/><path d="M1024.5 261.0 L1021.7 262.4 L943.7 220.4 L946.5 219.0 Z" fill="#5a9a52" stroke="#5a9a52" stroke-width="0.5"/><path d="M977.3 342.6 L978.4 343.9 L900.4 301.9 L899.3 300.6 Z" fill="#2b5327" stroke="#2b5327" stroke-width="0.5"/><path d="M1021.7 262.4 L1020.2 262.0 L942.2 220.0 L943.7 220.4 Z" fill="#589750" stroke="#589750" stroke-width="0.5"/><path d="M964.2 355.6 L964.8 356.4 L886.8 314.4 L886.2 313.6 Z" fill="#315b2c" stroke="#315b2c" stroke-width="0.5"/><path d="M1025.1 243.2 L1024.2 243.1 L946.2 201.1 L947.1 201.2 Z" fill="#5a9a52" stroke="#5a9a52" stroke-width="0.5"/><path d="M964.3 353.2 L964.2 355.6 L886.2 313.6 L886.3 311.2 Z" fill="#487f41" stroke="#487f41" stroke-width="0.5"/><path d="M1024.2 243.1 L1022.3 244.4 L944.3 202.4 L946.2 201.1 Z" fill="#5a9a52" stroke="#5a9a52" stroke-width="0.5"/><path d="M964.8 349.9 L964.3 353.2 L886.3 311.2 L886.8 307.9 Z" fill="#4b8444" stroke="#4b8444" stroke-width="0.5"/><path d="M1022.3 244.4 L1019.9 246.4 L941.9 204.4 L944.3 202.4 Z" fill="#5a9a52" stroke="#5a9a52" stroke-width="0.5"/><path d="M965.5 346.3 L964.8 349.9 L886.8 307.9 L887.5 304.3 Z" fill="#4d8646" stroke="#4d8646" stroke-width="0.5"/><path d="M1019.9 246.4 L1017.4 248.9 L939.4 206.9 L941.9 204.4 Z" fill="#5a9a52" stroke="#5a9a52" stroke-width="0.5"/><path d="M966.3 342.5 L965.5 346.3 L887.5 304.3 L888.3 300.5 Z" fill="#4e8847" stroke="#4e8847" stroke-width="0.5"/><path d="M1017.4 248.9 L1014.8 251.5 L936.8 209.5 L939.4 206.9 Z" fill="#5a9a52" stroke="#5a9a52" stroke-width="0.5"/><path d="M965.9 340.5 L966.3 342.5 L888.3 300.5 L887.9 298.5 Z" fill="#3e7039" stroke="#3e7039" stroke-width="0.5"/><path d="M1014.8 251.5 L1013.0 252.1 L935.0 210.1 L936.8 209.5 Z" fill="#5a9a52" stroke="#5a9a52" stroke-width="0.5"/><path d="M965.3 339.7 L965.9 340.5 L887.9 298.5 L887.3 297.7 Z" fill="#2f592b" stroke="#2f592b" stroke-width="0.5"/><path d="M1013.0 252.1 L1012.1 251.9 L934.1 209.9 L935.0 210.1 Z" fill="#5a9a52" stroke="#5a9a52" stroke-width="0.5"/><path d="M952.2 347.2 L952.3 348.4 L874.3 306.4 L874.2 305.2 Z" fill="#42753c" stroke="#42753c" stroke-width="0.5"/><path d="M1012.6 235.2 L1011.6 235.6 L933.6 193.6 L934.6 193.2 Z" fill="#5a9a52" stroke="#5a9a52" stroke-width="0.5"/><path d="M953.0 344.6 L952.2 347.2 L874.2 305.2 L875.0 302.6 Z" fill="#518c49" stroke="#518c49" stroke-width="0.5"/><path d="M954.3 341.2 L953.0 344.6 L875.0 302.6 L876.3 299.2 Z" fill="#538f4b" stroke="#538f4b" stroke-width="0.5"/><path d="M1011.6 235.6 L1010.0 237.6 L932.0 195.6 L933.6 193.6 Z" fill="#5a9a52" stroke="#5a9a52" stroke-width="0.5"/><path d="M955.9 337.6 L954.3 341.2 L876.3 299.2 L877.9 295.6 Z" fill="#54914d" stroke="#54914d" stroke-width="0.5"/><path d="M1010.0 237.6 L1007.9 240.6 L929.9 198.6 L932.0 195.6 Z" fill="#599851" stroke="#599851" stroke-width="0.5"/><path d="M957.7 334.0 L955.9 337.6 L877.9 295.6 L879.7 292.0 Z" fill="#55934e" stroke="#55934e" stroke-width="0.5"/><path d="M1007.9 240.6 L1005.9 243.9 L927.9 201.9 L929.9 198.6 Z" fill="#579650" stroke="#579650" stroke-width="0.5"/><path d="M1005.9 243.9 L1003.9 247.4 L925.9 205.4 L927.9 201.9 Z" fill="#57954f" stroke="#57954f" stroke-width="0.5"/><path d="M958.0 331.5 L957.7 334.0 L879.7 292.0 L880.0 289.5 Z" fill="#4a8244" stroke="#4a8244" stroke-width="0.5"/><path d="M1003.9 247.4 L1002.1 248.9 L924.1 206.9 L925.9 205.4 Z" fill="#5a9a52" stroke="#5a9a52" stroke-width="0.5"/><path d="M957.8 330.3 L958.0 331.5 L880.0 289.5 L879.8 288.3 Z" fill="#41743b" stroke="#41743b" stroke-width="0.5"/><path d="M1002.1 248.9 L1001.0 249.3 L923.0 207.3 L924.1 206.9 Z" fill="#5a9a52" stroke="#5a9a52" stroke-width="0.5"/><path d="M957.2 329.6 L957.8 330.3 L879.8 288.3 L879.2 287.6 Z" fill="#2b5227" stroke="#2b5227" stroke-width="0.5"/><path d="M1001.0 249.3 L1000.1 249.0 L922.1 207.0 L923.0 207.3 Z" fill="#57964f" stroke="#57964f" stroke-width="0.5"/><path d="M954.8 317.2 L953.8 319.7 L875.8 277.7 L876.8 275.2 Z" fill="#528f4b" stroke="#528f4b" stroke-width="0.5"/><path d="M953.8 319.7 L951.4 322.6 L873.4 280.6 L875.8 277.7 Z" fill="#5a9a52" stroke="#5a9a52" stroke-width="0.5"/><path d="M990.6 250.6 L989.1 252.8 L911.1 210.8 L912.6 208.6 Z" fill="#599951" stroke="#599951" stroke-width="0.5"/><path d="M955.0 315.7 L954.8 317.2 L876.8 275.2 L877.0 273.7 Z" fill="#4c8545" stroke="#4c8545" stroke-width="0.5"/><path d="M991.8 246.8 L990.6 250.6 L912.6 208.6 L913.8 204.8 Z" fill="#508b49" stroke="#508b49" stroke-width="0.5"/><path d="M989.1 252.8 L988.1 253.7 L910.1 211.7 L911.1 210.8 Z" fill="#5a9a52" stroke="#5a9a52" stroke-width="0.5"/><path d="M945.4 332.3 L946.0 333.0 L868.0 291.0 L867.4 290.3 Z" fill="#295025" stroke="#295025" stroke-width="0.5"/><path d="M951.4 322.6 L949.1 325.6 L871.1 283.6 L873.4 280.6 Z" fill="#5a9a52" stroke="#5a9a52" stroke-width="0.5"/><path d="M954.8 314.6 L955.0 315.7 L877.0 273.7 L876.8 272.6 Z" fill="#3e6f38" stroke="#3e6f38" stroke-width="0.5"/><path d="M993.0 243.1 L991.8 246.8 L913.8 204.8 L915.0 201.1 Z" fill="#518d4a" stroke="#518d4a" stroke-width="0.5"/><path d="M997.4 236.6 L996.5 236.3 L918.5 194.3 L919.4 194.6 Z" fill="#56954f" stroke="#56954f" stroke-width="0.5"/><path d="M988.1 253.7 L987.0 254.0 L909.0 212.0 L910.1 211.7 Z" fill="#5a9a52" stroke="#5a9a52" stroke-width="0.5"/><path d="M949.1 325.6 L947.0 328.5 L869.0 286.5 L871.1 283.6 Z" fill="#599851" stroke="#599851" stroke-width="0.5"/><path d="M945.7 330.9 L945.4 332.3 L867.4 290.3 L867.7 288.9 Z" fill="#4d8646" stroke="#4d8646" stroke-width="0.5"/><path d="M947.0 328.5 L945.7 330.9 L867.7 288.9 L869.0 286.5 Z" fill="#57954f" stroke="#57954f" stroke-width="0.5"/><path d="M994.4 239.7 L993.0 243.1 L915.0 201.1 L916.4 197.7 Z" fill="#538f4b" stroke="#538f4b" stroke-width="0.5"/><path d="M996.5 236.3 L995.6 237.3 L917.6 195.3 L918.5 194.3 Z" fill="#5a9a52" stroke="#5a9a52" stroke-width="0.5"/><path d="M995.6 237.3 L994.4 239.7 L916.4 197.7 L917.6 195.3 Z" fill="#55924d" stroke="#55924d" stroke-width="0.5"/><path d="M953.8 313.2 L954.8 314.6 L876.8 272.6 L875.8 271.2 Z" fill="#2e582a" stroke="#2e582a" stroke-width="0.5"/><path d="M987.0 254.0 L985.5 253.7 L907.5 211.7 L909.0 212.0 Z" fill="#5a9a52" stroke="#5a9a52" stroke-width="0.5"/><path d="M957.4 298.1 L956.7 299.5 L878.7 257.5 L879.4 256.1 Z" fill="#53904c" stroke="#53904c" stroke-width="0.5"/><path d="M956.7 299.5 L955.3 301.7 L877.3 259.7 L878.7 257.5 Z" fill="#589850" stroke="#589850" stroke-width="0.5"/><path d="M976.1 263.2 L975.2 264.5 L897.2 222.5 L898.1 221.2 Z" fill="#589750" stroke="#589750" stroke-width="0.5"/><path d="M977.1 260.7 L976.1 263.2 L898.1 221.2 L899.1 218.7 Z" fill="#53904c" stroke="#53904c" stroke-width="0.5"/><path d="M957.5 296.7 L957.4 298.1 L879.4 256.1 L879.5 254.7 Z" fill="#4a8243" stroke="#4a8243" stroke-width="0.5"/><path d="M975.2 264.5 L974.2 265.3 L896.2 223.3 L897.2 222.5 Z" fill="#5a9a52" stroke="#5a9a52" stroke-width="0.5"/><path d="M955.3 301.7 L952.5 303.5 L874.5 261.5 L877.3 259.7 Z" fill="#5a9a52" stroke="#5a9a52" stroke-width="0.5"/><path d="M977.2 257.2 L977.1 260.7 L899.1 218.7 L899.2 215.2 Z" fill="#477e41" stroke="#477e41" stroke-width="0.5"/><path d="M957.2 294.6 L957.5 296.7 L879.5 254.7 L879.2 252.6 Z" fill="#40733b" stroke="#40733b" stroke-width="0.5"/><path d="M974.2 265.3 L972.4 266.0 L894.4 224.0 L896.2 223.3 Z" fill="#5a9a52" stroke="#5a9a52" stroke-width="0.5"/><path d="M952.5 303.5 L949.9 305.5 L871.9 263.5 L874.5 261.5 Z" fill="#5a9a52" stroke="#5a9a52" stroke-width="0.5"/><path d="M964.5 280.1 L963.6 281.3 L885.6 239.3 L886.5 238.1 Z" fill="#599951" stroke="#599951" stroke-width="0.5"/><path d="M965.0 278.6 L964.5 280.1 L886.5 238.1 L887.0 236.6 Z" fill="#528e4b" stroke="#528e4b" stroke-width="0.5"/><path d="M977.5 253.7 L977.2 257.2 L899.2 215.2 L899.5 211.7 Z" fill="#498042" stroke="#498042" stroke-width="0.5"/><path d="M963.6 281.3 L961.8 282.9 L883.8 240.9 L885.6 239.3 Z" fill="#5a9a52" stroke="#5a9a52" stroke-width="0.5"/><path d="M965.4 276.1 L965.0 278.6 L887.0 236.6 L887.4 234.1 Z" fill="#4c8445" stroke="#4c8445" stroke-width="0.5"/><path d="M955.3 293.1 L957.2 294.6 L879.2 252.6 L877.3 251.1 Z" fill="#254921" stroke="#254921" stroke-width="0.5"/><path d="M972.4 266.0 L970.3 264.9 L892.3 222.9 L894.4 224.0 Z" fill="#528f4b" stroke="#528f4b" stroke-width="0.5"/><path d="M949.9 305.5 L947.5 307.5 L869.5 265.5 L871.9 263.5 Z" fill="#5a9a52" stroke="#5a9a52" stroke-width="0.5"/><path d="M977.9 250.4 L977.5 253.7 L899.5 211.7 L899.9 208.4 Z" fill="#4b8344" stroke="#4b8344" stroke-width="0.5"/><path d="M961.8 282.9 L959.2 283.3 L881.2 241.3 L883.8 240.9 Z" fill="#5a9a52" stroke="#5a9a52" stroke-width="0.5"/><path d="M964.4 273.5 L965.4 276.1 L887.4 234.1 L886.4 231.5 Z" fill="#396834" stroke="#396834" stroke-width="0.5"/><path d="M945.1 310.7 L945.4 311.8 L867.4 269.8 L867.1 268.7 Z" fill="#3d6e37" stroke="#3d6e37" stroke-width="0.5"/><path d="M947.5 307.5 L945.7 309.3 L867.7 267.3 L869.5 265.5 Z" fill="#5a9a52" stroke="#5a9a52" stroke-width="0.5"/><path d="M980.2 246.3 L979.3 246.6 L901.3 204.6 L902.2 204.3 Z" fill="#5a9a52" stroke="#5a9a52" stroke-width="0.5"/><path d="M945.7 309.3 L945.1 310.7 L867.1 268.7 L867.7 267.3 Z" fill="#54914c" stroke="#54914c" stroke-width="0.5"/><path d="M978.5 247.8 L977.9 250.4 L899.9 208.4 L900.5 205.8 Z" fill="#4e8847" stroke="#4e8847" stroke-width="0.5"/><path d="M979.3 246.6 L978.5 247.8 L900.5 205.8 L901.3 204.6 Z" fill="#589750" stroke="#589750" stroke-width="0.5"/><path d="M953.6 291.5 L955.3 293.1 L877.3 251.1 L875.6 249.5 Z" fill="#284f25" stroke="#284f25" stroke-width="0.5"/><path d="M970.3 264.9 L968.2 264.1 L890.2 222.1 L892.3 222.9 Z" fill="#56944e" stroke="#56944e" stroke-width="0.5"/><path d="M959.2 283.3 L956.6 283.9 L878.6 241.9 L881.2 241.3 Z" fill="#5a9a52" stroke="#5a9a52" stroke-width="0.5"/><path d="M963.6 270.7 L964.4 273.5 L886.4 231.5 L885.6 228.7 Z" fill="#3c6d37" stroke="#3c6d37" stroke-width="0.5"/><path d="M952.2 289.7 L953.6 291.5 L875.6 249.5 L874.2 247.7 Z" fill="#2d5529" stroke="#2d5529" stroke-width="0.5"/><path d="M968.2 264.1 L966.1 263.6 L888.1 221.6 L890.2 222.1 Z" fill="#599951" stroke="#599951" stroke-width="0.5"/><path d="M956.6 283.9 L954.1 284.7 L876.1 242.7 L878.6 241.9 Z" fill="#5a9a52" stroke="#5a9a52" stroke-width="0.5"/><path d="M963.1 267.9 L963.6 270.7 L885.6 228.7 L885.1 225.9 Z" fill="#3f723a" stroke="#3f723a" stroke-width="0.5"/><path d="M951.3 288.1 L952.2 289.7 L874.2 247.7 L873.3 246.1 Z" fill="#34602f" stroke="#34602f" stroke-width="0.5"/><path d="M966.1 263.6 L964.4 263.5 L886.4 221.5 L888.1 221.6 Z" fill="#5a9a52" stroke="#5a9a52" stroke-width="0.5"/><path d="M954.1 284.7 L952.3 285.6 L874.3 243.6 L876.1 242.7 Z" fill="#5a9a52" stroke="#5a9a52" stroke-width="0.5"/><path d="M962.9 265.7 L963.1 267.9 L885.1 225.9 L884.9 223.7 Z" fill="#44783e" stroke="#44783e" stroke-width="0.5"/><path d="M951.4 286.8 L951.3 288.1 L873.3 246.1 L873.4 244.8 Z" fill="#498143" stroke="#498143" stroke-width="0.5"/><path d="M964.4 263.5 L963.4 264.3 L885.4 222.3 L886.4 221.5 Z" fill="#5a9a52" stroke="#5a9a52" stroke-width="0.5"/><path d="M952.3 285.6 L951.4 286.8 L873.4 244.8 L874.3 243.6 Z" fill="#599951" stroke="#599951" stroke-width="0.5"/><path d="M963.4 264.3 L962.9 265.7 L884.9 223.7 L885.4 222.3 Z" fill="#528e4a" stroke="#528e4a" stroke-width="0.5"/><path d="M1011.6 235.6 L933.6 193.6" stroke="#0c180a" stroke-width="0.9" opacity="1"/><path d="M1003.9 247.4 L925.9 205.4" stroke="#0c180a" stroke-width="0.9" opacity="1"/><path d="M995.6 237.3 L917.6 195.3" stroke="#0c180a" stroke-width="0.9" opacity="1"/><path d="M990.6 250.6 L912.6 208.6" stroke="#0c180a" stroke-width="0.9" opacity="1"/><path d="M980.2 246.3 L902.2 204.3" stroke="#0c180a" stroke-width="0.9" opacity="1"/><path d="M978.5 247.8 L900.5 205.8" stroke="#0c180a" stroke-width="0.9" opacity="1"/><path d="M977.1 260.7 L899.1 218.7" stroke="#0c180a" stroke-width="0.9" opacity="1"/><path d="M972.4 266.0 L894.4 224.0" stroke="#0c180a" stroke-width="0.9" opacity="1"/><path d="M964.4 263.5 L886.4 221.5" stroke="#0c180a" stroke-width="0.9" opacity="1"/><path d="M962.9 265.7 L884.9 223.7" stroke="#0c180a" stroke-width="0.9" opacity="1"/><path d="M965.4 276.1 L887.4 234.1" stroke="#0c180a" stroke-width="0.9" opacity="1"/><path d="M961.8 282.9 L883.8 240.9" stroke="#0c180a" stroke-width="0.9" opacity="1"/><path d="M952.3 285.6 L874.3 243.6" stroke="#0c180a" stroke-width="0.9" opacity="1"/><path d="M951.3 288.1 L873.3 246.1" stroke="#0c180a" stroke-width="0.9" opacity="1"/><path d="M957.2 294.6 L879.2 252.6" stroke="#0c180a" stroke-width="0.9" opacity="1"/><path d="M955.3 301.7 L877.3 259.7" stroke="#0c180a" stroke-width="0.9" opacity="1"/><path d="M945.7 309.3 L867.7 267.3" stroke="#0c180a" stroke-width="0.9" opacity="1"/><path d="M945.4 311.8 L867.4 269.8" stroke="#0c180a" stroke-width="0.9" opacity="1"/><path d="M953.8 319.7 L875.8 277.7" stroke="#0c180a" stroke-width="0.9" opacity="1"/><path d="M945.7 330.9 L867.7 288.9" stroke="#0c180a" stroke-width="0.9" opacity="1"/><path d="M957.7 334.0 L879.7 292.0" stroke="#0c180a" stroke-width="0.9" opacity="1"/><path d="M952.2 347.2 L874.2 305.2" stroke="#0c180a" stroke-width="0.9" opacity="1"/><path d="M966.3 342.5 L888.3 300.5" stroke="#0c180a" stroke-width="0.9" opacity="1"/><path d="M964.2 355.6 L886.2 313.6" stroke="#0c180a" stroke-width="0.9" opacity="1"/><path d="M978.4 343.9 L900.4 301.9" stroke="#0c180a" stroke-width="0.9" opacity="1"/><path d="M980.0 355.0 L902.0 313.0" stroke="#0c180a" stroke-width="0.9" opacity="1"/><path d="M991.9 337.9 L913.9 295.9" stroke="#0c180a" stroke-width="0.9" opacity="1"/><path d="M1023.6 278.4 L945.6 236.4" stroke="#0c180a" stroke-width="0.9" opacity="1"/><path d="M1031.4 258.6 L953.4 216.6" stroke="#0c180a" stroke-width="0.9" opacity="1"/><path d="M1021.7 262.4 L943.7 220.4" stroke="#0c180a" stroke-width="0.9" opacity="1"/><path d="M1024.2 243.1 L946.2 201.1" stroke="#0c180a" stroke-width="0.9" opacity="1"/><path d="M1014.8 251.5 L936.8 209.5" stroke="#0c180a" stroke-width="0.9" opacity="1"/><path d="M935.2 194.0 L934.6 193.2 M934.6 193.2 L933.6 193.6 M933.6 193.6 L932.0 195.6 M932.0 195.6 L929.9 198.6 M920.0 196.5 L919.4 194.6 M919.4 194.6 L918.5 194.3 M918.5 194.3 L917.6 195.3 M917.6 195.3 L916.4 197.7 M916.4 197.7 L915.0 201.1 M915.0 201.1 L913.8 204.8 M913.8 204.8 L912.6 208.6 M904.9 207.1 L903.5 205.3 M903.5 205.3 L902.2 204.3 M902.2 204.3 L901.3 204.6 M901.3 204.6 L900.5 205.8 M900.5 205.8 L899.9 208.4 M899.9 208.4 L899.5 211.7 M899.5 211.7 L899.2 215.2 M899.2 215.2 L899.1 218.7 M899.1 218.7 L898.1 221.2 M898.1 221.2 L897.2 222.5 M897.2 222.5 L896.2 223.3 M896.2 223.3 L894.4 224.0 M894.4 224.0 L892.3 222.9 M892.3 222.9 L890.2 222.1 M890.2 222.1 L888.1 221.6 M888.1 221.6 L886.4 221.5 M886.4 221.5 L885.4 222.3 M885.4 222.3 L884.9 223.7 M884.9 223.7 L885.1 225.9 M885.1 225.9 L885.6 228.7 M885.6 228.7 L886.4 231.5 M886.4 231.5 L887.4 234.1 M887.4 234.1 L887.0 236.6 M887.0 236.6 L886.5 238.1 M886.5 238.1 L885.6 239.3 M885.6 239.3 L883.8 240.9 M883.8 240.9 L881.2 241.3 M881.2 241.3 L878.6 241.9 M878.6 241.9 L876.1 242.7 M876.1 242.7 L874.3 243.6 M874.3 243.6 L873.4 244.8 M873.4 244.8 L873.3 246.1 M873.3 246.1 L874.2 247.7 M874.2 247.7 L875.6 249.5 M875.6 249.5 L877.3 251.1 M877.3 251.1 L879.2 252.6 M879.2 252.6 L879.5 254.7 M879.5 254.7 L879.4 256.1 M879.4 256.1 L878.7 257.5 M878.7 257.5 L877.3 259.7 M877.3 259.7 L874.5 261.5 M874.5 261.5 L871.9 263.5 M871.9 263.5 L869.5 265.5 M869.5 265.5 L867.7 267.3 M867.7 267.3 L867.1 268.7 M867.1 268.7 L867.4 269.8 M867.4 269.8 L868.8 270.5 M868.8 270.5 L870.9 271.0 M870.9 271.0 L873.2 271.2 M876.8 275.2 L875.8 277.7 M875.8 277.7 L873.4 280.6 M873.4 280.6 L871.1 283.6 M871.1 283.6 L869.0 286.5 M869.0 286.5 L867.7 288.9 M867.7 288.9 L867.4 290.3 M867.4 290.3 L868.0 291.0 M868.0 291.0 L869.8 290.6 M877.9 295.6 L876.3 299.2 M876.3 299.2 L875.0 302.6 M875.0 302.6 L874.2 305.2 M874.2 305.2 L874.3 306.4 M874.3 306.4 L875.2 306.5 M886.3 311.2 L886.2 313.6 M886.2 313.6 L886.8 314.4 M886.8 314.4 L887.8 314.0 M1013.2 236.0 L935.2 194.0 M1012.6 235.2 L934.6 193.2 M1011.6 235.6 L933.6 193.6 M952.3 348.4 L874.3 306.4 M964.2 355.6 L886.2 313.6 M964.8 356.4 L886.8 314.4 M965.8 356.0 L887.8 314.0 M1025.1 243.2 L947.1 201.2" fill="none" stroke="#10200e" stroke-width="1.1" stroke-linecap="round"/><path d="M1012.1 251.9 L1011.5 251.1 L1011.1 249.1 L1011.9 245.3 L1012.6 241.7 L1013.1 238.4 L1013.2 236.0 L1012.6 235.2 L1011.6 235.6 L1010.0 237.6 L1007.9 240.6 L1005.9 243.9 L1003.9 247.4 L1002.1 248.9 L1001.0 249.3 L1000.1 249.0 L999.0 247.7 L998.9 244.4 L998.5 241.3 L998.0 238.5 L997.4 236.6 L996.5 236.3 L995.6 237.3 L994.4 239.7 L993.0 243.1 L991.8 246.8 L990.6 250.6 L989.1 252.8 L988.1 253.7 L987.0 254.0 L985.5 253.7 L984.2 251.3 L982.9 249.1 L981.5 247.3 L980.2 246.3 L979.3 246.6 L978.5 247.8 L977.9 250.4 L977.5 253.7 L977.2 257.2 L977.1 260.7 L976.1 263.2 L975.2 264.5 L974.2 265.3 L972.4 266.0 L970.3 264.9 L968.2 264.1 L966.1 263.6 L964.4 263.5 L963.4 264.3 L962.9 265.7 L963.1 267.9 L963.6 270.7 L964.4 273.5 L965.4 276.1 L965.0 278.6 L964.5 280.1 L963.6 281.3 L961.8 282.9 L959.2 283.3 L956.6 283.9 L954.1 284.7 L952.3 285.6 L951.4 286.8 L951.3 288.1 L952.2 289.7 L953.6 291.5 L955.3 293.1 L957.2 294.6 L957.5 296.7 L957.4 298.1 L956.7 299.5 L955.3 301.7 L952.5 303.5 L949.9 305.5 L947.5 307.5 L945.7 309.3 L945.1 310.7 L945.4 311.8 L946.8 312.5 L948.9 313.0 L951.2 313.2 L953.8 313.2 L954.8 314.6 L955.0 315.7 L954.8 317.2 L953.8 319.7 L951.4 322.6 L949.1 325.6 L947.0 328.5 L945.7 330.9 L945.4 332.3 L946.0 333.0 L947.8 332.6 L950.3 331.8 L952.9 330.6 L955.7 329.2 L957.2 329.6 L957.8 330.3 L958.0 331.5 L957.7 334.0 L955.9 337.6 L954.3 341.2 L953.0 344.6 L952.2 347.2 L952.3 348.4 L953.2 348.5 L955.1 347.2 L957.5 345.2 L960.0 342.7 L962.6 340.1 L964.4 339.5 L965.3 339.7 L965.9 340.5 L966.3 342.5 L965.5 346.3 L964.8 349.9 L964.3 353.2 L964.2 355.6 L964.8 356.4 L965.8 356.0 L967.4 354.0 L969.5 351.0 L971.5 347.7 L973.5 344.2 L975.3 342.7 L976.4 342.3 L977.3 342.6 L978.4 343.9 L978.5 347.2 L978.9 350.3 L979.4 353.1 L980.0 355.0 L980.9 355.3 L981.8 354.3 L983.0 351.9 L984.4 348.5 L985.6 344.8 L986.8 341.0 L988.3 338.8 L989.3 337.9 L990.4 337.6 L991.9 337.9 L993.2 340.3 L994.5 342.5 L995.9 344.3 L997.2 345.3 L998.1 345.0 L998.9 343.8 L999.5 341.2 L999.9 337.9 L1000.2 334.4 L1000.3 330.9 L1001.3 328.4 L1002.2 327.1 L1003.2 326.3 L1005.0 325.6 L1007.1 326.7 L1009.2 327.5 L1011.3 328.0 L1013.0 328.1 L1014.0 327.3 L1014.5 325.9 L1014.3 323.7 L1013.8 320.9 L1013.0 318.1 L1012.0 315.5 L1012.4 313.0 L1012.9 311.5 L1013.8 310.3 L1015.6 308.7 L1018.2 308.3 L1020.8 307.7 L1023.3 306.9 L1025.1 306.0 L1026.0 304.8 L1026.1 303.5 L1025.2 301.9 L1023.8 300.1 L1022.1 298.5 L1020.2 297.0 L1019.9 294.9 L1020.0 293.5 L1020.7 292.1 L1022.1 289.9 L1024.9 288.1 L1027.5 286.1 L1029.9 284.1 L1031.7 282.3 L1032.3 280.9 L1032.0 279.8 L1030.6 279.1 L1028.5 278.6 L1026.2 278.4 L1023.6 278.4 L1022.6 277.0 L1022.4 275.9 L1022.6 274.4 L1023.6 271.9 L1026.0 269.0 L1028.3 266.0 L1030.4 263.1 L1031.7 260.7 L1032.0 259.3 L1031.4 258.6 L1029.6 259.0 L1027.1 259.8 L1024.5 261.0 L1021.7 262.4 L1020.2 262.0 L1019.6 261.3 L1019.4 260.1 L1019.7 257.6 L1021.5 254.0 L1023.1 250.4 L1024.4 247.0 L1025.2 244.4 L1025.1 243.2 L1024.2 243.1 L1022.3 244.4 L1019.9 246.4 L1017.4 248.9 L1014.8 251.5 L1013.0 252.1 Z" fill="#487d44" stroke="#10200e" stroke-width="1"/><defs><radialGradient id="bore" cx="0.45" cy="0.55" r="0.6"><stop offset="0" stop-color="#1f3f1d"/><stop offset="0.8" stop-color="#2a5226"/><stop offset="1" stop-color="#3f7a39"/></radialGradient></defs><path d="M1000.5 276 C1006 283 1005 300 998 312 C992 321 980 324 972 318 C965 312 966 298 972 289 C978 281 990 278 1000.5 276 Z" fill="url(#bore)" stroke="#10200e" stroke-width="0.9"/></svg>
<svg style="left:1800px;top:150px;" width="110" height="120" viewBox="0 0 110 120"><defs>
<radialGradient id="vsh" cx="0.5" cy="0.5" r="0.5"><stop offset="0" stop-color="#000" stop-opacity="0.18"/><stop offset="1" stop-color="#000" stop-opacity="0"/></radialGradient>
<linearGradient id="vl" x1="0" y1="0" x2="0" y2="1"><stop offset="0" stop-color="#f4f4f4"/><stop offset="1" stop-color="#dedede"/></linearGradient>
<linearGradient id="vr" x1="0" y1="0" x2="0" y2="1"><stop offset="0" stop-color="#f0f0f0"/><stop offset="1" stop-color="#d8d8d8"/></linearGradient>
</defs>
<ellipse cx="57" cy="83" rx="40" ry="20" fill="url(#vsh)"/>
<path d="M56.7 17.6 L91.7 33.7 L56.7 51.9 L21.7 33 Z" fill="#efefef" stroke="#8a8a8a" stroke-width="0.6"/>
<path d="M21.7 33 L56.7 51.9 L56.7 93.6 L24.4 72 Z" fill="url(#vl)" stroke="#8a8a8a" stroke-width="0.6"/>
<path d="M56.7 51.9 L91.7 33.7 L87.7 70.8 L56.7 93.6 Z" fill="url(#vr)" stroke="#8a8a8a" stroke-width="0.6"/>
<path d="M24.4 72 L19.2 14.5" stroke="#5fd65f" stroke-width="1.6"/>
<path d="M24.4 72 L60.8 99" stroke="#8f8fe8" stroke-width="2"/>
<text x="14.5" y="23" font-size="10.5" fill="#70dc70" font-family="Liberation Sans">Y</text>
<text x="63" y="109.5" font-size="11.5" fill="#8686f0" font-family="Liberation Sans">Z</text>
<text transform="translate(47,38.5) rotate(-28) skewX(-35)" font-size="7.5" fill="#9a9a9a" font-family="Liberation Sans">TOP</text>
<text transform="translate(31,55) rotate(35)" font-size="8" fill="#9a9a9a" font-family="Liberation Sans">LEFT</text>
<text transform="translate(61,77) rotate(-38)" font-size="8" fill="#9a9a9a" font-family="Liberation Sans">FRONT</text>
</svg>
</body></html>
